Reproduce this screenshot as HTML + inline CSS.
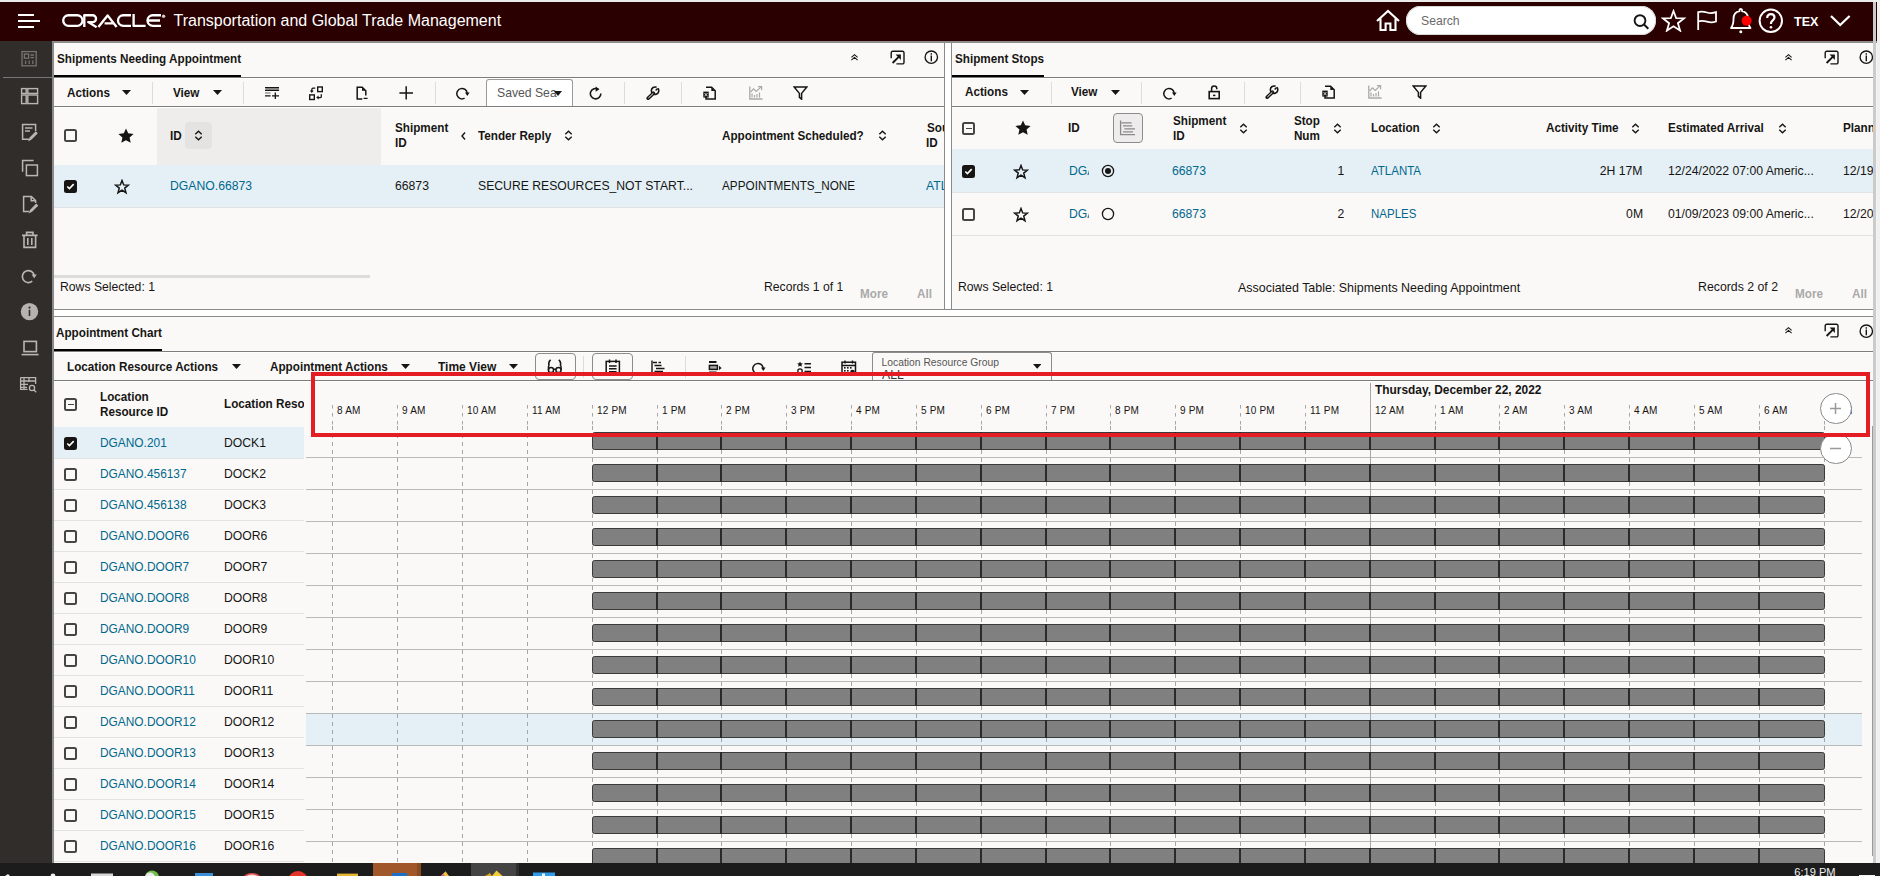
<!DOCTYPE html>
<html><head><meta charset="utf-8"><title>OTM</title>
<style>
html,body{margin:0;padding:0;}
body{width:1880px;height:876px;overflow:hidden;position:relative;background:#fbf9f8;font-family:"Liberation Sans",sans-serif;}
.a{position:absolute;display:block;}
.t{position:absolute;white-space:nowrap;line-height:20px;height:20px;}
.cb{width:13px;height:13px;box-sizing:border-box;border:2px solid #454545;border-radius:2.5px;}
.ck{background:#161513;border-color:#161513;}
</style></head><body>

<div class="a" style="left:0px;top:0px;width:1880px;height:2px;background:#ececec;"></div>
<div class="a" style="left:0px;top:2px;width:1877px;height:39px;background:#2a0000;"></div>
<div class="a" style="left:1877px;top:0px;width:3px;height:863px;background:#f0f0f0;"></div>
<div class="a" style="left:1876px;top:41px;width:1px;height:822px;background:#f4f4f4;"></div>
<div class="a" style="left:0px;top:41px;width:52px;height:822px;background:#312d2a;"></div>
<div class="a" style="left:52px;top:41px;width:2px;height:822px;background:#8a8a8a;"></div>
<div class="a" style="left:3px;top:77px;width:49px;height:1px;background:#777;"></div>
<svg class="a" style="left:20px;top:50px;" width="18" height="18" viewBox="0 0 18 18"><g stroke="#78736e" stroke-width="1.3" fill="none"><rect x="2" y="1.6" width="14.2" height="14.2"/><rect x="4.4" y="4" width="4.2" height="4.2"/><path d="M10.4 5 H14 M10.4 7.6 H14 M5.6 10.4 V14 M9.2 10.4 V14 M12.8 10.4 V14"/></g></svg>
<svg class="a" style="left:19px;top:86px;" width="21" height="20" viewBox="0 0 21 20"><g stroke="#b9b6b3" stroke-width="1.4" fill="none"><rect x="2.6" y="2.6" width="4.6" height="4.8"/><rect x="8.8" y="2.6" width="9.8" height="4.8"/><rect x="2.6" y="9" width="4.6" height="8.6"/><rect x="8.8" y="9" width="9.8" height="8.6"/></g></svg>
<svg class="a" style="left:20px;top:122px;" width="20" height="20" viewBox="0 0 20 20"><g stroke="#b9b6b3" stroke-width="1.5" fill="none"><path d="M9 17.2 H2.6 V2.4 H15.6 V9"/><path d="M5 6 H12.5 M5 9 H10"/><path d="M16.8 11.2 L11.2 16.8 L9.6 17.8 L10.2 16 L15.8 10.2 Z"/></g></svg>
<svg class="a" style="left:20px;top:158px;" width="20" height="20" viewBox="0 0 20 20"><g stroke="#b9b6b3" stroke-width="1.5" fill="none"><path d="M2.6 13.8 V2.6 H13.6"/><rect x="6.4" y="7" width="11" height="10.6"/></g></svg>
<svg class="a" style="left:20px;top:194px;" width="20" height="20" viewBox="0 0 20 20"><g stroke="#b9b6b3" stroke-width="1.5" fill="none"><path d="M9 17.4 H3.6 V2.4 H11.4 L15.6 6.6 V9"/><path d="M11.2 2.6 V6.8 H15.4"/><path d="M17.2 11.6 L11.6 17.2 L10 18 L10.6 16.4 L16.2 10.6 Z"/></g></svg>
<svg class="a" style="left:20px;top:230px;" width="20" height="20" viewBox="0 0 20 20"><g stroke="#b9b6b3" stroke-width="1.6" fill="none"><path d="M2 5.4 H17.6 M6.6 5.4 V2.4 H13 V5.4"/><path d="M4 5.4 V17.4 H15.6 V5.4 M7.8 8 V15 M11.8 8 V15"/></g></svg>
<svg class="a" style="left:20px;top:268px;" width="18" height="18" viewBox="0 0 18 18"><path d="M12.2 13.2 A6 6 0 1 1 14.2 7.4" stroke="#b9b6b3" stroke-width="1.7" fill="none"/><path d="M11.6 6.4 L16.8 6.4 L14.2 10.2 Z" fill="#b9b6b3"/></svg>
<svg class="a" style="left:19.5px;top:302px;" width="19" height="19" viewBox="0 0 19 19"><circle cx="9.5" cy="9.6" r="8.7" fill="#b5b2af"/><circle cx="9.5" cy="5.6" r="1.1" fill="#312d2a"/><path d="M9.5 7.8 V14" stroke="#312d2a" stroke-width="1.6"/></svg>
<svg class="a" style="left:20px;top:339px;" width="20" height="18" viewBox="0 0 20 18"><g stroke="#b9b6b3" stroke-width="1.6" fill="none"><rect x="4" y="2.4" width="12.4" height="10.2"/><path d="M1.6 15.6 H18.6"/></g></svg>
<svg class="a" style="left:19px;top:376px;" width="20" height="17" viewBox="0 0 20 17"><g stroke="#b9b6b3" stroke-width="1.3" fill="none"><path d="M1.6 1.6 H16.6 V8 M1.6 1.6 V13.4 H8.5 M1.6 5 H16.6 M1.6 8.4 H9 M1.6 11.4 H8 M5 1.6 V13 M10 1.6 V6"/><circle cx="13" cy="12" r="2.6"/><path d="M14.8 13.8 L17.2 16.2"/></g></svg>
<div class="a" style="left:944px;top:42px;width:8px;height:268px;background:#ffffff;"></div>
<div class="a" style="left:54px;top:309px;width:1819px;height:8px;background:#ffffff;"></div>
<div class="a" style="left:54px;top:41px;width:1823px;height:2px;background:#8c8c8c;"></div>
<div class="a" style="left:944px;top:42px;width:1px;height:268px;background:#8a8a8a;"></div>
<div class="a" style="left:951px;top:42px;width:1px;height:268px;background:#8a8a8a;"></div>
<div class="a" style="left:54px;top:309px;width:1819px;height:1px;background:#8a8a8a;"></div>
<div class="a" style="left:54px;top:316px;width:1819px;height:1px;background:#8a8a8a;"></div>
<div class="a" style="left:18px;top:14px;width:16px;height:2px;background:#ffffff;"></div>
<div class="a" style="left:18px;top:20px;width:22px;height:2px;background:#ffffff;"></div>
<div class="a" style="left:18px;top:26px;width:16px;height:2px;background:#ffffff;"></div>
<svg class="a" style="left:61px;top:13px;" width="106" height="15" viewBox="0 0 106 15"><g stroke="#fff" stroke-width="2.35" fill="none" stroke-linejoin="round">
<rect x="2.2" y="2.2" width="19.3" height="10.6" rx="5.3"/>
<path d="M23.3 14 V2.2 H31.6 A3.45 3.45 0 0 1 31.6 9.1 H27.2 L35.6 14.2"/>
<path d="M37.4 14 L46.6 2.4 L55.6 14 M43.6 10.3 H52.6"/>
<path d="M70 2.2 H62.3 A5.3 5.3 0 0 0 62.3 12.8 H70"/>
<path d="M72.6 1 V12.8 H84.6"/>
<path d="M100 2.2 H91.8 A5.3 5.3 0 0 0 91.8 12.8 H100 M87 7.5 H99"/>
</g><circle cx="102.6" cy="3.2" r="1.7" fill="#ccc"/></svg>
<div class="t" style="left:173.5px;top:11px;font-size:16.0px;font-weight:normal;color:#ffffff;">Transportation and Global Trade Management</div>
<svg class="a" style="left:1375px;top:9px;" width="26" height="23" viewBox="0 0 26 23"><path d="M2 12 L13 2 L24 12 M5.5 9.2 V21 H10.6 V14.5 H15.4 V21 H20.5 V9.2" stroke="#fff" stroke-width="2.1" fill="none" stroke-linejoin="miter"/></svg>
<div class="a" style="left:1406px;top:6px;width:250px;height:29px;background:#fff;border-radius:15px;box-shadow:0 0 0 1px #d8d8d8 inset"></div>
<div class="t" style="left:1421px;top:11.3px;font-size:13.0px;font-weight:normal;color:#6a6a6a;transform:scaleX(0.9385);transform-origin:0 0;">Search</div>
<svg class="a" style="left:1633px;top:14px;" width="18" height="16" viewBox="0 0 18 16"><circle cx="7" cy="6.6" r="5.4" stroke="#161513" stroke-width="1.9" fill="none"/><path d="M11 10.6 L15.3 14.8" stroke="#161513" stroke-width="2.1"/></svg>
<svg class="a" style="left:1661px;top:9px;" width="26" height="23" viewBox="0 0 26 23"><polygon points="12.5,2 15.2,9.2 23,9.4 16.9,14.2 19.1,21.6 12.5,17.3 5.9,21.6 8.1,14.2 2,9.4 9.8,9.2" fill="none" stroke="#fff" stroke-width="1.8" stroke-linejoin="miter"/></svg>
<svg class="a" style="left:1696px;top:10px;" width="23" height="21" viewBox="0 0 23 21"><path d="M2.2 20 V2.2 C5 1 8 1.6 11 2.5 C14 3.4 17 3.2 20 2.2 V11.5 C17 12.6 14 12.6 11 11.7 C8 10.8 5 10.6 2.2 11.5" stroke="#fff" stroke-width="1.8" fill="none"/></svg>
<svg class="a" style="left:1728px;top:7px;" width="26" height="27" viewBox="0 0 26 27"><path d="M3 21 C5 18.5 5.5 16 5.5 12 C5.5 7.5 8 4.8 11.5 4.2 V2.8 A1.3 1.3 0 0 1 14 2.8 V4.2 C17.5 4.8 20 7.5 20 12 C20 16 20.5 18.5 22.5 21 Z" stroke="#fff" stroke-width="1.8" fill="none" stroke-linejoin="round"/><circle cx="12.8" cy="24.7" r="1.5" fill="#fff"/><circle cx="18.6" cy="13.8" r="5" fill="#ff0000"/></svg>
<svg class="a" style="left:1758px;top:8px;" width="26" height="26" viewBox="0 0 26 26"><circle cx="12.8" cy="12.8" r="11.2" stroke="#fff" stroke-width="2" fill="none"/><path d="M9.2 10 C9.2 7.4 10.8 6.2 12.9 6.2 C15 6.2 16.5 7.6 16.5 9.6 C16.5 12.2 13 12.4 13 15.2 V16" stroke="#fff" stroke-width="2.2" fill="none"/><circle cx="13" cy="19.3" r="1.3" fill="#fff"/></svg>
<div class="t" style="left:1794px;top:11.8px;font-size:12.6px;font-weight:bold;color:#ffffff;">TEX</div>
<svg class="a" style="left:1829px;top:14px;" width="23" height="13" viewBox="0 0 23 13"><path d="M2 2 L11.2 11 L20.6 2" stroke="#fff" stroke-width="2.3" fill="none"/></svg>
<div class="t" style="left:57px;top:49.2px;font-size:13.0px;font-weight:bold;color:#161513;transform:scaleX(0.9000);transform-origin:0 0;">Shipments Needing Appointment</div>
<div class="a" style="left:54px;top:75px;width:187px;height:2px;background:#000;"></div>
<div class="a" style="left:54px;top:77px;width:890px;height:1px;background:#7d7d7d;"></div>
<div class="a" style="left:54px;top:78px;width:890px;height:1px;background:#ffffff;"></div>
<svg class="a" style="left:849.5px;top:53px;" width="9" height="9" viewBox="0 0 9 9"><path d="M1.4 4.4 L4.5 1.6 L7.6 4.4 M1.4 7.2 L4.5 4.4 L7.6 7.2" stroke="#161513" stroke-width="1.05" fill="none"/></svg>
<svg class="a" style="left:889.5px;top:49.5px;" width="15" height="15" viewBox="0 0 15 15"><path d="M1.2 8.2 V2.7 A1.5 1.5 0 0 1 2.7 1.2 H12.5 A1.5 1.5 0 0 1 14 2.7 V12.4 A1.5 1.5 0 0 1 12.5 13.9 H6.4" stroke="#161513" stroke-width="1.4" fill="none"/><path d="M2.6 13 L9.2 6.4" stroke="#161513" stroke-width="1.9"/><path d="M5.6 4.6 H10.9 V9.9 Z" fill="#161513"/></svg>
<svg class="a" style="left:924px;top:49.5px;" width="15" height="15" viewBox="0 0 15 15"><circle cx="7.3" cy="7.2" r="6.2" stroke="#161513" stroke-width="1.35" fill="none"/><rect x="6.6" y="3.2" width="1.4" height="1.5" fill="#161513"/><path d="M7.3 5.6 V11.2" stroke="#161513" stroke-width="1.4"/></svg>
<div class="t" style="left:67.2px;top:82.5px;font-size:13.0px;font-weight:bold;color:#161513;transform:scaleX(0.9000);transform-origin:0 0;">Actions</div>
<svg class="a" style="left:122px;top:90.2px;" width="9" height="5" viewBox="0 0 9 5"><polygon points="0,0 9,0 4.5,5" fill="#161513"/></svg>
<div class="a" style="left:152px;top:82px;width:1px;height:22px;background:#dcdcdc;"></div>
<div class="t" style="left:173px;top:82.5px;font-size:13.0px;font-weight:bold;color:#161513;transform:scaleX(0.9000);transform-origin:0 0;">View</div>
<svg class="a" style="left:213px;top:90.2px;" width="9" height="5" viewBox="0 0 9 5"><polygon points="0,0 9,0 4.5,5" fill="#161513"/></svg>
<div class="a" style="left:243px;top:82px;width:1px;height:22px;background:#dcdcdc;"></div>
<svg class="a" style="left:265px;top:86px;" width="15" height="14" viewBox="0 0 15 14"><rect x="0.5" y="1.5" width="13.6" height="3" fill="#a8a8a8"/><path d="M0 1.6 H14 M0 4.4 H14" stroke="#161513" stroke-width="1.1"/><path d="M0 7 H5.6" stroke="#777" stroke-width="1.1"/><path d="M0 9.8 H5.6 M7 9.8 H14 M10.3 6.5 V13" stroke="#161513" stroke-width="1.3"/></svg>
<svg class="a" style="left:309.2px;top:85.6px;" width="15" height="15" viewBox="0 0 15 15"><rect x="8.7" y="1" width="4.6" height="4.6" stroke="#161513" stroke-width="1.4" fill="#fff"/><rect x="0.7" y="8.9" width="4.6" height="4.6" stroke="#161513" stroke-width="1.4" fill="#fff"/><path d="M6.3 2.2 H4 C3 2.2 2.8 3 2.8 4 V5.6" stroke="#161513" stroke-width="1.3" fill="none"/><path d="M0.9 4.6 L2.8 7 L4.7 4.6 Z" fill="#161513"/><path d="M12.3 8.2 V10.4 C12.3 11.2 11.8 11.6 11 11.6 H9" stroke="#161513" stroke-width="1.3" fill="none"/><path d="M9.6 9.5 L7.2 11.6 L9.6 13.6 Z" fill="#161513"/></svg>
<svg class="a" style="left:356px;top:85.8px;" width="13" height="14" viewBox="0 0 13 14"><path d="M6.3 13 H1.2 V1.2 H6.2 L9.8 4.8 V9.5" stroke="#161513" stroke-width="1.5" fill="none" stroke-linejoin="miter"/><path d="M6 1.5 V4.8 H9.5 Z" fill="#161513"/><path d="M7.6 12.4 H11.6" stroke="#161513" stroke-width="1.3"/></svg>
<svg class="a" style="left:398.7px;top:86px;" width="15" height="15" viewBox="0 0 15 15"><path d="M0.4 7 H14 M7.2 0.2 V13.6" stroke="#161513" stroke-width="1.5"/></svg>
<div class="a" style="left:434.5px;top:82px;width:1px;height:22px;background:#dcdcdc;"></div>
<svg class="a" style="left:456.2px;top:86.6px;" width="14" height="13" viewBox="0 0 14 13"><path d="M8.6 11.2 A5.2 5.2 0 1 1 11.2 6.2" stroke="#161513" stroke-width="1.5" fill="none"/><path d="M9 5.6 L13.6 5.6 L11.3 8.9 Z" fill="#161513"/></svg>
<div class="a" style="left:486px;top:78.5px;width:87px;height:28px;box-sizing:border-box;background:#fff;border:1px solid #9a9a9a;border-bottom:none;border-radius:3px 3px 0 0"></div>
<div class="t" style="left:496.6px;top:82.7px;font-size:13.0px;font-weight:normal;color:#555;transform:scaleX(0.9385);transform-origin:0 0;">Saved Sea</div>
<svg class="a" style="left:554px;top:90.7px;" width="8" height="5" viewBox="0 0 8 5"><polygon points="0,0 8,0 4.0,5" fill="#161513"/></svg>
<svg class="a" style="left:588.6px;top:86px;" width="14" height="14" viewBox="0 0 14 14"><path d="M9.4 3.3 A5.2 5.2 0 1 0 11.8 7.6" stroke="#161513" stroke-width="1.6" fill="none"/><path d="M6.6 0.4 L10.4 3.2 L6.6 5.8 Z" fill="#161513"/></svg>
<div class="a" style="left:624px;top:82px;width:1px;height:22px;background:#dcdcdc;"></div>
<svg class="a" style="left:645.8px;top:85.6px;" width="15" height="14" viewBox="0 0 15 14"><path d="M11.9 2.3 A3.7 3.7 0 1 1 10.6 1.3" stroke="#161513" stroke-width="1.6" fill="none"/><path d="M9.6 4.6 L11.6 2.4" stroke="#161513" stroke-width="1.5"/><path d="M7.4 7.2 L2.2 12.2" stroke="#161513" stroke-width="3.6" stroke-linecap="round"/><path d="M7 7.6 L2.6 11.8" stroke="#fbf9f8" stroke-width="1" stroke-linecap="round"/></svg>
<div class="a" style="left:681px;top:82px;width:1px;height:22px;background:#dcdcdc;"></div>
<svg class="a" style="left:702.8px;top:85.6px;" width="14" height="14" viewBox="0 0 14 14"><path d="M3 1.2 H8.6 L12.2 4.8 V13 H3 V10.6" stroke="#161513" stroke-width="1.5" fill="none"/><path d="M8.3 1.5 V5 H11.9 Z" fill="#161513"/><rect x="0.3" y="5.6" width="5.4" height="6" fill="#161513"/><path d="M1.5 7 L4.5 10.3 M4.5 7 L1.5 10.3" stroke="#fff" stroke-width="0.8"/></svg>
<svg class="a" style="left:748.5px;top:85.8px;" width="14" height="14" viewBox="0 0 14 14"><path d="M0.8 0.5 V13 H13.5" stroke="#a9a9a9" stroke-width="1.3" fill="none"/><path d="M3 11.5 V7.5 M5.5 11.5 V9 M8 11.5 V8 M10.5 11.5 V6.5" stroke="#a9a9a9" stroke-width="1.2"/><path d="M1.5 6.2 L4.5 2.8 L7.2 5.4 L11.8 1.1" stroke="#a9a9a9" stroke-width="1.2" fill="none"/><path d="M9 0.6 H12.6 V4.2" stroke="#a9a9a9" stroke-width="1.2" fill="none"/></svg>
<svg class="a" style="left:792.6px;top:85.6px;" width="15" height="14" viewBox="0 0 15 14"><path d="M1.2 1 H13.8 L8.6 7.4 V13.2 L6.4 11.4 V7.4 Z" stroke="#161513" stroke-width="1.5" fill="none" stroke-linejoin="miter"/></svg>
<div class="a" style="left:54px;top:106px;width:890px;height:1px;background:#7d7d7d;"></div>
<div class="a" style="left:54px;top:107px;width:890px;height:1px;background:#ffffff;"></div>
<div class="a" style="left:157px;top:108px;width:223.5px;height:56.5px;background:#efedec;"></div>
<div class="a cb" style="left:64px;top:129px"></div>
<svg class="a" style="left:117.6px;top:127.8px;" width="16" height="16" viewBox="0 0 16 16"><polygon points="8.00,0.40 10.20,5.37 15.61,5.93 11.57,9.56 12.70,14.87 8.00,12.15 3.30,14.87 4.43,9.56 0.39,5.93 5.80,5.37" fill="#161513"/></svg>
<div class="t" style="left:169.9px;top:126.30000000000001px;font-size:13.0px;font-weight:bold;color:#161513;transform:scaleX(0.9000);transform-origin:0 0;">ID</div>
<div class="a" style="left:185px;top:122px;width:27px;height:27px;background:#e5e3e2;border-radius:4px"></div>
<svg class="a" style="left:194px;top:130px;" width="9" height="11" viewBox="0 0 9 11"><path d="M1.3 4.2 L4.5 1.2 L7.7 4.2 M1.3 6.8 L4.5 9.8 L7.7 6.8" stroke="#161513" stroke-width="1.4" fill="none"/></svg>
<div class="t" style="left:394.7px;top:118.19999999999999px;font-size:13.0px;font-weight:bold;color:#161513;transform:scaleX(0.9000);transform-origin:0 0;">Shipment</div>
<div class="t" style="left:394.7px;top:133.2px;font-size:13.0px;font-weight:bold;color:#161513;transform:scaleX(0.9000);transform-origin:0 0;">ID</div>
<svg class="a" style="left:459.5px;top:131px;" width="7" height="10" viewBox="0 0 7 10"><path d="M5 1.5 L2 5 L5 8.5" stroke="#161513" stroke-width="1.4" fill="none"/></svg>
<div class="t" style="left:478.1px;top:126.19999999999999px;font-size:13.0px;font-weight:bold;color:#161513;transform:scaleX(0.9000);transform-origin:0 0;">Tender Reply</div>
<svg class="a" style="left:564.2px;top:130.2px;" width="9" height="11" viewBox="0 0 9 11"><path d="M1.3 4.2 L4.5 1.2 L7.7 4.2 M1.3 6.8 L4.5 9.8 L7.7 6.8" stroke="#161513" stroke-width="1.4" fill="none"/></svg>
<div class="t" style="left:722.2px;top:126.19999999999999px;font-size:13.0px;font-weight:bold;color:#161513;transform:scaleX(0.9000);transform-origin:0 0;">Appointment Scheduled?</div>
<svg class="a" style="left:877.5px;top:130.2px;" width="9" height="11" viewBox="0 0 9 11"><path d="M1.3 4.2 L4.5 1.2 L7.7 4.2 M1.3 6.8 L4.5 9.8 L7.7 6.8" stroke="#161513" stroke-width="1.4" fill="none"/></svg>
<div class="a" style="left:920px;top:108px;width:24px;height:56px;overflow:hidden">
<div class="t" style="left:6.9px;top:10.199999999999989px;font-size:13.0px;font-weight:bold;color:#161513;transform:scaleX(0.9000);transform-origin:0 0;">Sou</div>
<div class="t" style="left:6.2px;top:25.19999999999999px;font-size:13.0px;font-weight:bold;color:#161513;transform:scaleX(0.9000);transform-origin:0 0;">ID</div>
</div>
<div class="a" style="left:54px;top:164.5px;width:890px;height:43px;background:#e4f0f6;"></div>
<div class="a" style="left:54px;top:207px;width:890px;height:1px;background:#dfe3e5;"></div>
<div class="a cb ck" style="left:64px;top:180px"><svg width="13" height="13" viewBox="0 0 13 13" style="position:absolute;left:-2px;top:-2px"><path d="M3.3 6.5 L5.4 8.6 L9.7 4.1" stroke="#fff" stroke-width="1.6" fill="none"/></svg></div>
<svg class="a" style="left:114px;top:178.8px;" width="16" height="16" viewBox="0 0 16 16"><polygon points="8.00,0.40 10.00,5.65 15.61,5.93 11.23,9.45 12.70,14.87 8.00,11.80 3.30,14.87 4.77,9.45 0.39,5.93 6.00,5.65" fill="none" stroke="#161513" stroke-width="1.75" stroke-linejoin="miter" transform="translate(1.2 1.1) scale(0.85)"/></svg>
<div class="t" style="left:170px;top:176.4px;font-size:13.0px;font-weight:normal;color:#00688c;transform:scaleX(0.9385);transform-origin:0 0;">DGANO.66873</div>
<div class="t" style="left:394.7px;top:176.2px;font-size:13.0px;font-weight:normal;color:#161513;transform:scaleX(0.9385);transform-origin:0 0;">66873</div>
<div class="t" style="left:478.1px;top:176.2px;font-size:13.0px;font-weight:normal;color:#161513;transform:scaleX(0.9385);transform-origin:0 0;">SECURE RESOURCES_NOT START...</div>
<div class="t" style="left:722.2px;top:176.4px;font-size:12.52px;font-weight:normal;color:#161513;transform:scaleX(0.9385);transform-origin:0 0;">APPOINTMENTS_NONE</div>
<div class="a" style="left:920px;top:165px;width:24px;height:40px;overflow:hidden">
<div class="t" style="left:6.2px;top:11.400000000000006px;font-size:13.0px;font-weight:normal;color:#00688c;transform:scaleX(0.9385);transform-origin:0 0;">ATL</div>
</div>
<div class="a" style="left:54px;top:275px;width:316px;height:3px;background:#dcdcdc;"></div>
<div class="t" style="left:60px;top:277px;font-size:13.0px;font-weight:normal;color:#161513;transform:scaleX(0.9385);transform-origin:0 0;">Rows Selected: 1</div>
<div class="t" style="left:763.7px;top:277.2px;font-size:13.0px;font-weight:normal;color:#161513;transform:scaleX(0.9385);transform-origin:0 0;">Records 1 of 1</div>
<div class="t" style="left:860px;top:284.2px;font-size:13.0px;font-weight:bold;color:#a9a9a9;transform:scaleX(0.9000);transform-origin:0 0;">More</div>
<div class="t" style="left:917.4px;top:284.3px;font-size:13.0px;font-weight:bold;color:#a9a9a9;transform:scaleX(0.9000);transform-origin:0 0;">All</div>
<div class="t" style="left:955.3px;top:49.3px;font-size:13.0px;font-weight:bold;color:#161513;transform:scaleX(0.9000);transform-origin:0 0;">Shipment Stops</div>
<div class="a" style="left:952px;top:75px;width:92px;height:2px;background:#000;"></div>
<div class="a" style="left:952px;top:77px;width:921px;height:1px;background:#7d7d7d;"></div>
<div class="a" style="left:952px;top:78px;width:921px;height:1px;background:#ffffff;"></div>
<svg class="a" style="left:1783.5px;top:52.5px;" width="9" height="9" viewBox="0 0 9 9"><path d="M1.4 4.4 L4.5 1.6 L7.6 4.4 M1.4 7.2 L4.5 4.4 L7.6 7.2" stroke="#161513" stroke-width="1.05" fill="none"/></svg>
<svg class="a" style="left:1824px;top:49.5px;" width="15" height="15" viewBox="0 0 15 15"><path d="M1.2 8.2 V2.7 A1.5 1.5 0 0 1 2.7 1.2 H12.5 A1.5 1.5 0 0 1 14 2.7 V12.4 A1.5 1.5 0 0 1 12.5 13.9 H6.4" stroke="#161513" stroke-width="1.4" fill="none"/><path d="M2.6 13 L9.2 6.4" stroke="#161513" stroke-width="1.9"/><path d="M5.6 4.6 H10.9 V9.9 Z" fill="#161513"/></svg>
<svg class="a" style="left:1858.8px;top:49.5px;" width="15" height="15" viewBox="0 0 15 15"><circle cx="7.3" cy="7.2" r="6.2" stroke="#161513" stroke-width="1.35" fill="none"/><rect x="6.6" y="3.2" width="1.4" height="1.5" fill="#161513"/><path d="M7.3 5.6 V11.2" stroke="#161513" stroke-width="1.4"/></svg>
<div class="t" style="left:965.4px;top:81.9px;font-size:13.0px;font-weight:bold;color:#161513;transform:scaleX(0.9000);transform-origin:0 0;">Actions</div>
<svg class="a" style="left:1020.3px;top:89.7px;" width="9" height="5" viewBox="0 0 9 5"><polygon points="0,0 9,0 4.5,5" fill="#161513"/></svg>
<div class="a" style="left:1050.5px;top:82px;width:1px;height:22px;background:#dcdcdc;"></div>
<div class="t" style="left:1071.2px;top:81.9px;font-size:13.0px;font-weight:bold;color:#161513;transform:scaleX(0.9000);transform-origin:0 0;">View</div>
<svg class="a" style="left:1111.3px;top:89.7px;" width="9" height="5" viewBox="0 0 9 5"><polygon points="0,0 9,0 4.5,5" fill="#161513"/></svg>
<div class="a" style="left:1141.3px;top:82px;width:1px;height:22px;background:#dcdcdc;"></div>
<svg class="a" style="left:1162.6px;top:86.8px;" width="14" height="13" viewBox="0 0 14 13"><path d="M8.6 11.2 A5.2 5.2 0 1 1 11.2 6.2" stroke="#161513" stroke-width="1.5" fill="none"/><path d="M9 5.6 L13.6 5.6 L11.3 8.9 Z" fill="#161513"/></svg>
<svg class="a" style="left:1208px;top:83.8px;" width="13" height="16" viewBox="0 0 13 16"><rect x="1.2" y="7.6" width="10" height="7" stroke="#161513" stroke-width="1.6" fill="none"/><path d="M3.6 7.6 V4.6 A2.6 2.6 0 0 1 8.8 4.6 V5.2" stroke="#161513" stroke-width="1.5" fill="none"/><path d="M5 11.4 H7.4" stroke="#161513" stroke-width="1.5"/></svg>
<div class="a" style="left:1243.5px;top:82px;width:1px;height:22px;background:#dcdcdc;"></div>
<svg class="a" style="left:1265px;top:85px;" width="15" height="14" viewBox="0 0 15 14"><path d="M11.9 2.3 A3.7 3.7 0 1 1 10.6 1.3" stroke="#161513" stroke-width="1.6" fill="none"/><path d="M9.6 4.6 L11.6 2.4" stroke="#161513" stroke-width="1.5"/><path d="M7.4 7.2 L2.2 12.2" stroke="#161513" stroke-width="3.6" stroke-linecap="round"/><path d="M7 7.6 L2.6 11.8" stroke="#fbf9f8" stroke-width="1" stroke-linecap="round"/></svg>
<div class="a" style="left:1300px;top:82px;width:1px;height:22px;background:#dcdcdc;"></div>
<svg class="a" style="left:1321.6px;top:85.2px;" width="14" height="14" viewBox="0 0 14 14"><path d="M3 1.2 H8.6 L12.2 4.8 V13 H3 V10.6" stroke="#161513" stroke-width="1.5" fill="none"/><path d="M8.3 1.5 V5 H11.9 Z" fill="#161513"/><rect x="0.3" y="5.6" width="5.4" height="6" fill="#161513"/><path d="M1.5 7 L4.5 10.3 M4.5 7 L1.5 10.3" stroke="#fff" stroke-width="0.8"/></svg>
<svg class="a" style="left:1367.6px;top:85.3px;" width="14" height="14" viewBox="0 0 14 14"><path d="M0.8 0.5 V13 H13.5" stroke="#a9a9a9" stroke-width="1.3" fill="none"/><path d="M3 11.5 V7.5 M5.5 11.5 V9 M8 11.5 V8 M10.5 11.5 V6.5" stroke="#a9a9a9" stroke-width="1.2"/><path d="M1.5 6.2 L4.5 2.8 L7.2 5.4 L11.8 1.1" stroke="#a9a9a9" stroke-width="1.2" fill="none"/><path d="M9 0.6 H12.6 V4.2" stroke="#a9a9a9" stroke-width="1.2" fill="none"/></svg>
<svg class="a" style="left:1411.6px;top:85px;" width="15" height="14" viewBox="0 0 15 14"><path d="M1.2 1 H13.8 L8.6 7.4 V13.2 L6.4 11.4 V7.4 Z" stroke="#161513" stroke-width="1.5" fill="none" stroke-linejoin="miter"/></svg>
<div class="a" style="left:952px;top:106px;width:921px;height:1px;background:#7d7d7d;"></div>
<div class="a" style="left:952px;top:107px;width:921px;height:1px;background:#ffffff;"></div>
<div class="a cb" style="left:962px;top:122px"><div class="a" style="left:1.5px;top:3.8px;width:6px;height:1.5px;background:#454545"></div></div>
<svg class="a" style="left:1015.4px;top:120.4px;" width="16" height="16" viewBox="0 0 16 16"><polygon points="8.00,0.40 10.20,5.37 15.61,5.93 11.57,9.56 12.70,14.87 8.00,12.15 3.30,14.87 4.43,9.56 0.39,5.93 5.80,5.37" fill="#161513"/></svg>
<div class="t" style="left:1068px;top:118px;font-size:13.0px;font-weight:bold;color:#161513;transform:scaleX(0.9000);transform-origin:0 0;">ID</div>
<div class="a" style="left:1113px;top:113px;width:30px;height:30px;box-sizing:border-box;background:#eeecec;border:1.2px solid #8c8c8c;border-radius:4px"></div>
<svg class="a" style="left:1119px;top:119px;" width="18" height="18" viewBox="0 0 18 18"><g stroke="#8a8a8a" stroke-width="1.3" fill="none"><path d="M1.6 1.5 V15.6 H16"/><path d="M2.3 3.8 H12.6 M4 6.8 H13.2 M5.4 9.9 H16 M4 12.8 H14"/></g></svg>
<div class="t" style="left:1173.2px;top:111px;font-size:13.0px;font-weight:bold;color:#161513;transform:scaleX(0.9000);transform-origin:0 0;">Shipment</div>
<div class="t" style="left:1173.2px;top:125.80000000000001px;font-size:13.0px;font-weight:bold;color:#161513;transform:scaleX(0.9000);transform-origin:0 0;">ID</div>
<svg class="a" style="left:1239px;top:123px;" width="9" height="11" viewBox="0 0 9 11"><path d="M1.3 4.2 L4.5 1.2 L7.7 4.2 M1.3 6.8 L4.5 9.8 L7.7 6.8" stroke="#161513" stroke-width="1.4" fill="none"/></svg>
<div class="t" style="right:560px;top:111px;font-size:13.0px;font-weight:bold;color:#161513;text-align:right;transform:scaleX(0.9000);transform-origin:100% 0;">Stop</div>
<div class="t" style="right:560px;top:125.69999999999999px;font-size:13.0px;font-weight:bold;color:#161513;text-align:right;transform:scaleX(0.9000);transform-origin:100% 0;">Num</div>
<svg class="a" style="left:1333.4px;top:123.3px;" width="9" height="11" viewBox="0 0 9 11"><path d="M1.3 4.2 L4.5 1.2 L7.7 4.2 M1.3 6.8 L4.5 9.8 L7.7 6.8" stroke="#161513" stroke-width="1.4" fill="none"/></svg>
<div class="t" style="left:1370.6px;top:118.19999999999999px;font-size:13.0px;font-weight:bold;color:#161513;transform:scaleX(0.9000);transform-origin:0 0;">Location</div>
<svg class="a" style="left:1432.2px;top:123.3px;" width="9" height="11" viewBox="0 0 9 11"><path d="M1.3 4.2 L4.5 1.2 L7.7 4.2 M1.3 6.8 L4.5 9.8 L7.7 6.8" stroke="#161513" stroke-width="1.4" fill="none"/></svg>
<div class="t" style="left:1545.8px;top:118.19999999999999px;font-size:13.0px;font-weight:bold;color:#161513;transform:scaleX(0.9000);transform-origin:0 0;">Activity Time</div>
<svg class="a" style="left:1631px;top:123.3px;" width="9" height="11" viewBox="0 0 9 11"><path d="M1.3 4.2 L4.5 1.2 L7.7 4.2 M1.3 6.8 L4.5 9.8 L7.7 6.8" stroke="#161513" stroke-width="1.4" fill="none"/></svg>
<div class="t" style="left:1668.2px;top:118.19999999999999px;font-size:13.0px;font-weight:bold;color:#161513;transform:scaleX(0.9000);transform-origin:0 0;">Estimated Arrival</div>
<svg class="a" style="left:1778.2px;top:123.3px;" width="9" height="11" viewBox="0 0 9 11"><path d="M1.3 4.2 L4.5 1.2 L7.7 4.2 M1.3 6.8 L4.5 9.8 L7.7 6.8" stroke="#161513" stroke-width="1.4" fill="none"/></svg>
<div class="a" style="left:952px;top:149.3px;width:921px;height:43px;background:#e4f0f6;"></div>
<div class="a" style="left:952px;top:192px;width:921px;height:1px;background:#dfe3e5;"></div>
<div class="a" style="left:952px;top:235px;width:921px;height:1px;background:#e1e1e1;"></div>
<div class="a cb ck" style="left:962px;top:165px"><svg width="13" height="13" viewBox="0 0 13 13" style="position:absolute;left:-2px;top:-2px"><path d="M3.3 6.5 L5.4 8.6 L9.7 4.1" stroke="#fff" stroke-width="1.6" fill="none"/></svg></div>
<svg class="a" style="left:1012.6px;top:163.8px;" width="16" height="16" viewBox="0 0 16 16"><polygon points="8.00,0.40 10.00,5.65 15.61,5.93 11.23,9.45 12.70,14.87 8.00,11.80 3.30,14.87 4.77,9.45 0.39,5.93 6.00,5.65" fill="none" stroke="#161513" stroke-width="1.75" stroke-linejoin="miter" transform="translate(1.2 1.1) scale(0.85)"/></svg>
<div class="a" style="left:1060px;top:154.8px;width:29px;height:26px;overflow:hidden">
<div class="t" style="left:8.5px;top:6px;font-size:13.0px;font-weight:normal;color:#00688c;transform:scaleX(0.9385);transform-origin:0 0;">DGANO.66873</div>
</div>
<svg class="a" style="left:1100.7px;top:163.60000000000002px;" width="14" height="14" viewBox="0 0 14 14"><circle cx="7" cy="7" r="5.6" stroke="#161513" stroke-width="1.3" fill="none"/><circle cx="7" cy="7" r="3" fill="#161513"/></svg>
<div class="t" style="left:1172.4px;top:160.8px;font-size:13.0px;font-weight:normal;color:#00688c;transform:scaleX(0.9385);transform-origin:0 0;">66873</div>
<div class="t" style="right:535.5999999999999px;top:160.8px;font-size:13.0px;font-weight:normal;color:#161513;text-align:right;transform:scaleX(0.9385);transform-origin:100% 0;">1</div>
<div class="t" style="left:1370.6px;top:160.8px;font-size:12.25px;font-weight:normal;color:#00688c;transform:scaleX(0.9385);transform-origin:0 0;">ATLANTA</div>
<div class="t" style="right:237.4000000000001px;top:160.8px;font-size:13.0px;font-weight:normal;color:#161513;text-align:right;transform:scaleX(0.9385);transform-origin:100% 0;">2H 17M</div>
<div class="t" style="left:1668.2px;top:160.8px;font-size:13.0px;font-weight:normal;color:#161513;transform:scaleX(0.9385);transform-origin:0 0;">12/24/2022 07:00 Americ...</div>
<div class="a cb" style="left:962px;top:208px"></div>
<svg class="a" style="left:1012.6px;top:206.9px;" width="16" height="16" viewBox="0 0 16 16"><polygon points="8.00,0.40 10.00,5.65 15.61,5.93 11.23,9.45 12.70,14.87 8.00,11.80 3.30,14.87 4.77,9.45 0.39,5.93 6.00,5.65" fill="none" stroke="#161513" stroke-width="1.75" stroke-linejoin="miter" transform="translate(1.2 1.1) scale(0.85)"/></svg>
<div class="a" style="left:1060px;top:197.9px;width:29px;height:26px;overflow:hidden">
<div class="t" style="left:8.5px;top:6px;font-size:13.0px;font-weight:normal;color:#00688c;transform:scaleX(0.9385);transform-origin:0 0;">DGANO.66873</div>
</div>
<svg class="a" style="left:1100.7px;top:206.70000000000002px;" width="14" height="14" viewBox="0 0 14 14"><circle cx="7" cy="7" r="5.6" stroke="#161513" stroke-width="1.3" fill="none"/></svg>
<div class="t" style="left:1172.4px;top:203.9px;font-size:13.0px;font-weight:normal;color:#00688c;transform:scaleX(0.9385);transform-origin:0 0;">66873</div>
<div class="t" style="right:535.5999999999999px;top:203.9px;font-size:13.0px;font-weight:normal;color:#161513;text-align:right;transform:scaleX(0.9385);transform-origin:100% 0;">2</div>
<div class="t" style="left:1370.6px;top:203.9px;font-size:12.25px;font-weight:normal;color:#00688c;transform:scaleX(0.9385);transform-origin:0 0;">NAPLES</div>
<div class="t" style="right:237.4000000000001px;top:203.9px;font-size:13.0px;font-weight:normal;color:#161513;text-align:right;transform:scaleX(0.9385);transform-origin:100% 0;">0M</div>
<div class="t" style="left:1668.2px;top:203.9px;font-size:13.0px;font-weight:normal;color:#161513;transform:scaleX(0.9385);transform-origin:0 0;">01/09/2023 09:00 Americ...</div>
<div class="a" style="left:1836px;top:108px;width:37px;height:120px;overflow:hidden">
<div class="t" style="left:6.5px;top:10.199999999999989px;font-size:13.0px;font-weight:bold;color:#161513;transform:scaleX(0.9000);transform-origin:0 0;">Plann</div>
<div class="t" style="left:6.5px;top:52.80000000000001px;font-size:13.0px;font-weight:normal;color:#161513;transform:scaleX(0.9385);transform-origin:0 0;">12/19/2022</div>
<div class="t" style="left:6.5px;top:95.9px;font-size:13.0px;font-weight:normal;color:#161513;transform:scaleX(0.9385);transform-origin:0 0;">12/20/2022</div>
</div>
<div class="t" style="left:958.2px;top:277px;font-size:13.0px;font-weight:normal;color:#161513;transform:scaleX(0.9385);transform-origin:0 0;">Rows Selected: 1</div>
<div class="t" style="left:1237.8px;top:278px;font-size:13.27px;font-weight:normal;color:#161513;transform:scaleX(0.9385);transform-origin:0 0;">Associated Table: Shipments Needing Appointment</div>
<div class="t" style="left:1697.8px;top:277.2px;font-size:13.11px;font-weight:normal;color:#161513;transform:scaleX(0.9385);transform-origin:0 0;">Records 2 of 2</div>
<div class="t" style="left:1794.5px;top:284.2px;font-size:13.0px;font-weight:bold;color:#a9a9a9;transform:scaleX(0.9000);transform-origin:0 0;">More</div>
<div class="t" style="left:1852px;top:284.3px;font-size:13.0px;font-weight:bold;color:#a9a9a9;transform:scaleX(0.9000);transform-origin:0 0;">All</div>
<div class="t" style="left:56.4px;top:323.4px;font-size:13.0px;font-weight:bold;color:#161513;transform:scaleX(0.9000);transform-origin:0 0;">Appointment Chart</div>
<div class="a" style="left:54px;top:349px;width:108px;height:2px;background:#000;"></div>
<div class="a" style="left:54px;top:351px;width:1819px;height:1px;background:#7d7d7d;"></div>
<div class="a" style="left:54px;top:352px;width:1819px;height:1px;background:#ffffff;"></div>
<svg class="a" style="left:1783.5px;top:326px;" width="9" height="9" viewBox="0 0 9 9"><path d="M1.4 4.4 L4.5 1.6 L7.6 4.4 M1.4 7.2 L4.5 4.4 L7.6 7.2" stroke="#161513" stroke-width="1.05" fill="none"/></svg>
<svg class="a" style="left:1824.2px;top:323.2px;" width="15" height="15" viewBox="0 0 15 15"><path d="M1.2 8.2 V2.7 A1.5 1.5 0 0 1 2.7 1.2 H12.5 A1.5 1.5 0 0 1 14 2.7 V12.4 A1.5 1.5 0 0 1 12.5 13.9 H6.4" stroke="#161513" stroke-width="1.4" fill="none"/><path d="M2.6 13 L9.2 6.4" stroke="#161513" stroke-width="1.9"/><path d="M5.6 4.6 H10.9 V9.9 Z" fill="#161513"/></svg>
<svg class="a" style="left:1858.8px;top:323.5px;" width="15" height="15" viewBox="0 0 15 15"><circle cx="7.3" cy="7.2" r="6.2" stroke="#161513" stroke-width="1.35" fill="none"/><rect x="6.6" y="3.2" width="1.4" height="1.5" fill="#161513"/><path d="M7.3 5.6 V11.2" stroke="#161513" stroke-width="1.4"/></svg>
<div class="t" style="left:67.4px;top:357.2px;font-size:13.0px;font-weight:bold;color:#161513;transform:scaleX(0.9000);transform-origin:0 0;">Location Resource Actions</div>
<svg class="a" style="left:231.7px;top:364.4px;" width="9" height="5" viewBox="0 0 9 5"><polygon points="0,0 9,0 4.5,5" fill="#161513"/></svg>
<div class="t" style="left:270.2px;top:357.2px;font-size:13.0px;font-weight:bold;color:#161513;transform:scaleX(0.9000);transform-origin:0 0;">Appointment Actions</div>
<svg class="a" style="left:400.7px;top:364.4px;" width="9" height="5" viewBox="0 0 9 5"><polygon points="0,0 9,0 4.5,5" fill="#161513"/></svg>
<div class="t" style="left:437.9px;top:357.2px;font-size:13.33px;font-weight:bold;color:#161513;transform:scaleX(0.9000);transform-origin:0 0;">Time View</div>
<svg class="a" style="left:509.4px;top:364.4px;" width="9" height="5" viewBox="0 0 9 5"><polygon points="0,0 9,0 4.5,5" fill="#161513"/></svg>
<div class="a" style="left:534.5px;top:353px;width:41.5px;height:27px;box-sizing:border-box;border:1.2px solid #8c8c8c;border-radius:4px"></div>
<div class="a" style="left:583px;top:356px;width:1px;height:22px;background:#dcdcdc;"></div>
<div class="a" style="left:592.3px;top:353px;width:40.5px;height:27px;box-sizing:border-box;border:1.2px solid #8c8c8c;border-radius:4px"></div>
<div class="a" style="left:685px;top:356px;width:1px;height:22px;background:#dcdcdc;"></div>
<svg class="a" style="left:547px;top:359px;" width="16" height="14" viewBox="0 0 16 14"><path d="M2 7 C1.4 4 2 2 3.6 0.8 M13.4 7 C14 4 13.4 2 11.8 0.8" stroke="#161513" stroke-width="1.6" fill="none"/><circle cx="4" cy="11" r="2.6" stroke="#161513" stroke-width="1.5" fill="none"/><circle cx="11.5" cy="11" r="2.6" stroke="#161513" stroke-width="1.5" fill="none"/><path d="M6.5 10.2 H9" stroke="#161513" stroke-width="1.4"/><path d="M1.5 7 V11 M14 7 V11" stroke="#161513" stroke-width="1.5"/></svg>
<svg class="a" style="left:604.5px;top:358.5px;" width="16" height="15" viewBox="0 0 16 15"><rect x="1.2" y="2.4" width="13.2" height="12" stroke="#161513" stroke-width="1.5" fill="none"/><path d="M4.5 0.5 V4 M11 0.5 V4" stroke="#161513" stroke-width="1.5"/><path d="M4 7 H11.6 M4 9.8 H11.6 M4 12.6 H11.6" stroke="#161513" stroke-width="1.4"/></svg>
<svg class="a" style="left:650.5px;top:359.5px;" width="15" height="14" viewBox="0 0 15 14"><path d="M1 0.5 V13.5" stroke="#161513" stroke-width="1.4"/><path d="M2 2.5 H6 M7.5 2.5 H10 M3.5 5.5 H10.5 M5 8.5 H13.5 M3.5 11.5 H12" stroke="#161513" stroke-width="1.5"/></svg>
<svg class="a" style="left:707.8px;top:360.2px;" width="15" height="14" viewBox="0 0 15 14"><path d="M1 2 H8.5 M1 12.5 H8.5" stroke="#161513" stroke-width="1.8"/><rect x="1.4" y="5.4" width="8" height="4" stroke="#161513" stroke-width="1.5" fill="#a9a9a9"/><path d="M11 5.8 L13.6 8 L11 10.2 Z" fill="#161513"/></svg>
<svg class="a" style="left:752px;top:361.5px;" width="14" height="13" viewBox="0 0 14 13"><path d="M8.6 11.2 A5.2 5.2 0 1 1 11.2 6.2" stroke="#161513" stroke-width="1.5" fill="none"/><path d="M9 5.6 L13.6 5.6 L11.3 8.9 Z" fill="#161513"/></svg>
<svg class="a" style="left:797px;top:360.5px;" width="15" height="14" viewBox="0 0 15 14"><polygon points="3,0.4 3.9,2.3 5.9,2.5 4.4,3.8 4.9,5.8 3,4.8 1.1,5.8 1.6,3.8 0.1,2.5 2.1,2.3" fill="#161513"/><path d="M7.5 2.8 H14 M7.5 6.5 H14 M7.5 10.5 H14" stroke="#161513" stroke-width="1.4"/><circle cx="3" cy="10" r="2.2" stroke="#161513" stroke-width="1.3" fill="none"/></svg>
<svg class="a" style="left:841px;top:359.5px;" width="16" height="15" viewBox="0 0 16 15"><rect x="1" y="2.2" width="13.5" height="12" stroke="#161513" stroke-width="1.5" fill="none"/><path d="M1 5.5 H14.5" stroke="#161513" stroke-width="1.5"/><path d="M4 0.5 V3.5 M11.5 0.5 V3.5" stroke="#161513" stroke-width="1.4"/><g fill="#161513"><rect x="3" y="7" width="1.6" height="1.6"/><rect x="6" y="7" width="1.6" height="1.6"/><rect x="9" y="7" width="1.6" height="1.6"/><rect x="3" y="10" width="1.6" height="1.6"/><rect x="6" y="10" width="1.6" height="1.6"/></g><circle cx="11.5" cy="12" r="2.3" fill="#161513"/></svg>
<div class="a" style="left:871.6px;top:352.3px;width:180px;height:28px;box-sizing:border-box;background:#fbf9f8;border:1px solid #8c8c8c;border-bottom:none;border-radius:3px 3px 0 0;overflow:hidden">
<div class="t" style="left:9px;top:0.0px;font-size:10.3px;font-weight:normal;color:#555;">Location Resource Group</div>
<div class="t" style="left:9px;top:11.699999999999989px;font-size:13.0px;font-weight:normal;color:#333;transform:scaleX(0.9385);transform-origin:0 0;">ALL</div>
</div>
<svg class="a" style="left:1032.7px;top:364.0px;" width="8.4" height="4.8" viewBox="0 0 8.4 4.8"><polygon points="0,0 8.4,0 4.2,4.8" fill="#161513"/></svg>
<div class="a" style="left:54px;top:380px;width:1819px;height:1px;background:#7d7d7d;"></div>
<div class="a" style="left:54px;top:381px;width:1819px;height:1px;background:#ffffff;"></div>
<div class="a cb" style="left:64px;top:398px"><div class="a" style="left:1.5px;top:3.8px;width:6px;height:1.5px;background:#454545"></div></div>
<div class="t" style="left:100.2px;top:387.3px;font-size:13.0px;font-weight:bold;color:#161513;transform:scaleX(0.9000);transform-origin:0 0;">Location</div>
<div class="t" style="left:100.2px;top:402px;font-size:13.0px;font-weight:bold;color:#161513;transform:scaleX(0.9000);transform-origin:0 0;">Resource ID</div>
<div class="a" style="left:218px;top:390px;width:86px;height:30px;overflow:hidden">
<div class="t" style="left:6.4px;top:4.399999999999977px;font-size:13.0px;font-weight:bold;color:#161513;transform:scaleX(0.9000);transform-origin:0 0;">Location Resource Name</div>
</div>
<div class="a" style="left:54px;top:427.3px;width:250px;height:31px;background:#e4f0f6;"></div>
<div class="a cb ck" style="left:64px;top:437px"><svg width="13" height="13" viewBox="0 0 13 13" style="position:absolute;left:-2px;top:-2px"><path d="M3.3 6.5 L5.4 8.6 L9.7 4.1" stroke="#fff" stroke-width="1.6" fill="none"/></svg></div>
<div class="t" style="left:100.3px;top:432.9px;font-size:12.68px;font-weight:normal;color:#00688c;transform:scaleX(0.9385);transform-origin:0 0;">DGANO.201</div>
<div class="t" style="left:224.3px;top:432.9px;font-size:13.0px;font-weight:normal;color:#161513;transform:scaleX(0.9385);transform-origin:0 0;">DOCK1</div>
<div class="a" style="left:54px;top:457.8px;width:250px;height:1px;background:#e2e2e2;"></div>
<div class="a cb" style="left:64px;top:468px"></div>
<div class="t" style="left:100.3px;top:463.9px;font-size:12.68px;font-weight:normal;color:#00688c;transform:scaleX(0.9385);transform-origin:0 0;">DGANO.456137</div>
<div class="t" style="left:224.3px;top:463.9px;font-size:13.0px;font-weight:normal;color:#161513;transform:scaleX(0.9385);transform-origin:0 0;">DOCK2</div>
<div class="a" style="left:54px;top:488.8px;width:250px;height:1px;background:#e2e2e2;"></div>
<div class="a cb" style="left:64px;top:499px"></div>
<div class="t" style="left:100.3px;top:495.0px;font-size:12.68px;font-weight:normal;color:#00688c;transform:scaleX(0.9385);transform-origin:0 0;">DGANO.456138</div>
<div class="t" style="left:224.3px;top:495.0px;font-size:13.0px;font-weight:normal;color:#161513;transform:scaleX(0.9385);transform-origin:0 0;">DOCK3</div>
<div class="a" style="left:54px;top:519.9px;width:250px;height:1px;background:#e2e2e2;"></div>
<div class="a cb" style="left:64px;top:530px"></div>
<div class="t" style="left:100.3px;top:526.0px;font-size:12.68px;font-weight:normal;color:#00688c;transform:scaleX(0.9385);transform-origin:0 0;">DGANO.DOOR6</div>
<div class="t" style="left:224.3px;top:526.0px;font-size:13.0px;font-weight:normal;color:#161513;transform:scaleX(0.9385);transform-origin:0 0;">DOOR6</div>
<div class="a" style="left:54px;top:550.9px;width:250px;height:1px;background:#e2e2e2;"></div>
<div class="a cb" style="left:64px;top:561px"></div>
<div class="t" style="left:100.3px;top:557.0px;font-size:12.68px;font-weight:normal;color:#00688c;transform:scaleX(0.9385);transform-origin:0 0;">DGANO.DOOR7</div>
<div class="t" style="left:224.3px;top:557.0px;font-size:13.0px;font-weight:normal;color:#161513;transform:scaleX(0.9385);transform-origin:0 0;">DOOR7</div>
<div class="a" style="left:54px;top:581.9px;width:250px;height:1px;background:#e2e2e2;"></div>
<div class="a cb" style="left:64px;top:592px"></div>
<div class="t" style="left:100.3px;top:588.1px;font-size:12.68px;font-weight:normal;color:#00688c;transform:scaleX(0.9385);transform-origin:0 0;">DGANO.DOOR8</div>
<div class="t" style="left:224.3px;top:588.1px;font-size:13.0px;font-weight:normal;color:#161513;transform:scaleX(0.9385);transform-origin:0 0;">DOOR8</div>
<div class="a" style="left:54px;top:613.0px;width:250px;height:1px;background:#e2e2e2;"></div>
<div class="a cb" style="left:64px;top:623px"></div>
<div class="t" style="left:100.3px;top:619.1px;font-size:12.68px;font-weight:normal;color:#00688c;transform:scaleX(0.9385);transform-origin:0 0;">DGANO.DOOR9</div>
<div class="t" style="left:224.3px;top:619.1px;font-size:13.0px;font-weight:normal;color:#161513;transform:scaleX(0.9385);transform-origin:0 0;">DOOR9</div>
<div class="a" style="left:54px;top:644.0px;width:250px;height:1px;background:#e2e2e2;"></div>
<div class="a cb" style="left:64px;top:654px"></div>
<div class="t" style="left:100.3px;top:650.1px;font-size:12.68px;font-weight:normal;color:#00688c;transform:scaleX(0.9385);transform-origin:0 0;">DGANO.DOOR10</div>
<div class="t" style="left:224.3px;top:650.1px;font-size:13.0px;font-weight:normal;color:#161513;transform:scaleX(0.9385);transform-origin:0 0;">DOOR10</div>
<div class="a" style="left:54px;top:675.0px;width:250px;height:1px;background:#e2e2e2;"></div>
<div class="a cb" style="left:64px;top:685px"></div>
<div class="t" style="left:100.3px;top:681.1px;font-size:12.68px;font-weight:normal;color:#00688c;transform:scaleX(0.9385);transform-origin:0 0;">DGANO.DOOR11</div>
<div class="t" style="left:224.3px;top:681.1px;font-size:13.0px;font-weight:normal;color:#161513;transform:scaleX(0.9385);transform-origin:0 0;">DOOR11</div>
<div class="a" style="left:54px;top:706.0px;width:250px;height:1px;background:#e2e2e2;"></div>
<div class="a cb" style="left:64px;top:716px"></div>
<div class="t" style="left:100.3px;top:712.2px;font-size:12.68px;font-weight:normal;color:#00688c;transform:scaleX(0.9385);transform-origin:0 0;">DGANO.DOOR12</div>
<div class="t" style="left:224.3px;top:712.2px;font-size:13.0px;font-weight:normal;color:#161513;transform:scaleX(0.9385);transform-origin:0 0;">DOOR12</div>
<div class="a" style="left:54px;top:737.1px;width:250px;height:1px;background:#e2e2e2;"></div>
<div class="a cb" style="left:64px;top:747px"></div>
<div class="t" style="left:100.3px;top:743.2px;font-size:12.68px;font-weight:normal;color:#00688c;transform:scaleX(0.9385);transform-origin:0 0;">DGANO.DOOR13</div>
<div class="t" style="left:224.3px;top:743.2px;font-size:13.0px;font-weight:normal;color:#161513;transform:scaleX(0.9385);transform-origin:0 0;">DOOR13</div>
<div class="a" style="left:54px;top:768.1px;width:250px;height:1px;background:#e2e2e2;"></div>
<div class="a cb" style="left:64px;top:778px"></div>
<div class="t" style="left:100.3px;top:774.2px;font-size:12.68px;font-weight:normal;color:#00688c;transform:scaleX(0.9385);transform-origin:0 0;">DGANO.DOOR14</div>
<div class="t" style="left:224.3px;top:774.2px;font-size:13.0px;font-weight:normal;color:#161513;transform:scaleX(0.9385);transform-origin:0 0;">DOOR14</div>
<div class="a" style="left:54px;top:799.1px;width:250px;height:1px;background:#e2e2e2;"></div>
<div class="a cb" style="left:64px;top:809px"></div>
<div class="t" style="left:100.3px;top:805.3px;font-size:12.68px;font-weight:normal;color:#00688c;transform:scaleX(0.9385);transform-origin:0 0;">DGANO.DOOR15</div>
<div class="t" style="left:224.3px;top:805.3px;font-size:13.0px;font-weight:normal;color:#161513;transform:scaleX(0.9385);transform-origin:0 0;">DOOR15</div>
<div class="a" style="left:54px;top:830.2px;width:250px;height:1px;background:#e2e2e2;"></div>
<div class="a cb" style="left:64px;top:840px"></div>
<div class="t" style="left:100.3px;top:836.3px;font-size:12.68px;font-weight:normal;color:#00688c;transform:scaleX(0.9385);transform-origin:0 0;">DGANO.DOOR16</div>
<div class="t" style="left:224.3px;top:836.3px;font-size:13.0px;font-weight:normal;color:#161513;transform:scaleX(0.9385);transform-origin:0 0;">DOOR16</div>
<div class="a" style="left:54px;top:861.2px;width:250px;height:1px;background:#e2e2e2;"></div>
<div class="a" style="left:306px;top:713.3px;width:1556px;height:32px;background:#e4f0f6;"></div>
<div class="a" style="left:306px;top:457px;width:1556px;height:1px;background:#b9b9b9;"></div>
<div class="a" style="left:306px;top:489px;width:1556px;height:1px;background:#b9b9b9;"></div>
<div class="a" style="left:306px;top:521px;width:1556px;height:1px;background:#b9b9b9;"></div>
<div class="a" style="left:306px;top:553px;width:1556px;height:1px;background:#b9b9b9;"></div>
<div class="a" style="left:306px;top:585px;width:1556px;height:1px;background:#b9b9b9;"></div>
<div class="a" style="left:306px;top:617px;width:1556px;height:1px;background:#b9b9b9;"></div>
<div class="a" style="left:306px;top:649px;width:1556px;height:1px;background:#b9b9b9;"></div>
<div class="a" style="left:306px;top:681px;width:1556px;height:1px;background:#b9b9b9;"></div>
<div class="a" style="left:306px;top:713px;width:1556px;height:1px;background:#b9b9b9;"></div>
<div class="a" style="left:306px;top:745px;width:1556px;height:1px;background:#b9b9b9;"></div>
<div class="a" style="left:306px;top:777px;width:1556px;height:1px;background:#b9b9b9;"></div>
<div class="a" style="left:306px;top:809px;width:1556px;height:1px;background:#b9b9b9;"></div>
<div class="a" style="left:306px;top:841px;width:1556px;height:1px;background:#b9b9b9;"></div>
<div class="a" style="left:1370px;top:383px;width:1px;height:480px;background:#a6a6a6;"></div>
<svg class="a" style="left:332px;top:405px" width="1" height="20"><path d="M0.5 0 V20" stroke="#a6a6a6" stroke-width="1" stroke-dasharray="3.6 4.4"/></svg>
<svg class="a" style="left:332px;top:426px" width="1" height="437"><path d="M0.5 0 V437" stroke="#a6a6a6" stroke-width="1" stroke-dasharray="4 4"/></svg>
<svg class="a" style="left:397px;top:405px" width="1" height="20"><path d="M0.5 0 V20" stroke="#a6a6a6" stroke-width="1" stroke-dasharray="3.6 4.4"/></svg>
<svg class="a" style="left:397px;top:426px" width="1" height="437"><path d="M0.5 0 V437" stroke="#a6a6a6" stroke-width="1" stroke-dasharray="4 4"/></svg>
<svg class="a" style="left:462px;top:405px" width="1" height="20"><path d="M0.5 0 V20" stroke="#a6a6a6" stroke-width="1" stroke-dasharray="3.6 4.4"/></svg>
<svg class="a" style="left:462px;top:426px" width="1" height="437"><path d="M0.5 0 V437" stroke="#a6a6a6" stroke-width="1" stroke-dasharray="4 4"/></svg>
<svg class="a" style="left:527px;top:405px" width="1" height="20"><path d="M0.5 0 V20" stroke="#a6a6a6" stroke-width="1" stroke-dasharray="3.6 4.4"/></svg>
<svg class="a" style="left:527px;top:426px" width="1" height="437"><path d="M0.5 0 V437" stroke="#a6a6a6" stroke-width="1" stroke-dasharray="4 4"/></svg>
<svg class="a" style="left:592px;top:405px" width="1" height="20"><path d="M0.5 0 V20" stroke="#a6a6a6" stroke-width="1" stroke-dasharray="3.6 4.4"/></svg>
<svg class="a" style="left:592px;top:426px" width="1" height="437"><path d="M0.5 0 V437" stroke="#a6a6a6" stroke-width="1" stroke-dasharray="4 4"/></svg>
<svg class="a" style="left:657px;top:405px" width="1" height="20"><path d="M0.5 0 V20" stroke="#a6a6a6" stroke-width="1" stroke-dasharray="3.6 4.4"/></svg>
<svg class="a" style="left:657px;top:426px" width="1" height="437"><path d="M0.5 0 V437" stroke="#a6a6a6" stroke-width="1" stroke-dasharray="4 4"/></svg>
<svg class="a" style="left:721px;top:405px" width="1" height="20"><path d="M0.5 0 V20" stroke="#a6a6a6" stroke-width="1" stroke-dasharray="3.6 4.4"/></svg>
<svg class="a" style="left:721px;top:426px" width="1" height="437"><path d="M0.5 0 V437" stroke="#a6a6a6" stroke-width="1" stroke-dasharray="4 4"/></svg>
<svg class="a" style="left:786px;top:405px" width="1" height="20"><path d="M0.5 0 V20" stroke="#a6a6a6" stroke-width="1" stroke-dasharray="3.6 4.4"/></svg>
<svg class="a" style="left:786px;top:426px" width="1" height="437"><path d="M0.5 0 V437" stroke="#a6a6a6" stroke-width="1" stroke-dasharray="4 4"/></svg>
<svg class="a" style="left:851px;top:405px" width="1" height="20"><path d="M0.5 0 V20" stroke="#a6a6a6" stroke-width="1" stroke-dasharray="3.6 4.4"/></svg>
<svg class="a" style="left:851px;top:426px" width="1" height="437"><path d="M0.5 0 V437" stroke="#a6a6a6" stroke-width="1" stroke-dasharray="4 4"/></svg>
<svg class="a" style="left:916px;top:405px" width="1" height="20"><path d="M0.5 0 V20" stroke="#a6a6a6" stroke-width="1" stroke-dasharray="3.6 4.4"/></svg>
<svg class="a" style="left:916px;top:426px" width="1" height="437"><path d="M0.5 0 V437" stroke="#a6a6a6" stroke-width="1" stroke-dasharray="4 4"/></svg>
<svg class="a" style="left:981px;top:405px" width="1" height="20"><path d="M0.5 0 V20" stroke="#a6a6a6" stroke-width="1" stroke-dasharray="3.6 4.4"/></svg>
<svg class="a" style="left:981px;top:426px" width="1" height="437"><path d="M0.5 0 V437" stroke="#a6a6a6" stroke-width="1" stroke-dasharray="4 4"/></svg>
<svg class="a" style="left:1046px;top:405px" width="1" height="20"><path d="M0.5 0 V20" stroke="#a6a6a6" stroke-width="1" stroke-dasharray="3.6 4.4"/></svg>
<svg class="a" style="left:1046px;top:426px" width="1" height="437"><path d="M0.5 0 V437" stroke="#a6a6a6" stroke-width="1" stroke-dasharray="4 4"/></svg>
<svg class="a" style="left:1110px;top:405px" width="1" height="20"><path d="M0.5 0 V20" stroke="#a6a6a6" stroke-width="1" stroke-dasharray="3.6 4.4"/></svg>
<svg class="a" style="left:1110px;top:426px" width="1" height="437"><path d="M0.5 0 V437" stroke="#a6a6a6" stroke-width="1" stroke-dasharray="4 4"/></svg>
<svg class="a" style="left:1175px;top:405px" width="1" height="20"><path d="M0.5 0 V20" stroke="#a6a6a6" stroke-width="1" stroke-dasharray="3.6 4.4"/></svg>
<svg class="a" style="left:1175px;top:426px" width="1" height="437"><path d="M0.5 0 V437" stroke="#a6a6a6" stroke-width="1" stroke-dasharray="4 4"/></svg>
<svg class="a" style="left:1240px;top:405px" width="1" height="20"><path d="M0.5 0 V20" stroke="#a6a6a6" stroke-width="1" stroke-dasharray="3.6 4.4"/></svg>
<svg class="a" style="left:1240px;top:426px" width="1" height="437"><path d="M0.5 0 V437" stroke="#a6a6a6" stroke-width="1" stroke-dasharray="4 4"/></svg>
<svg class="a" style="left:1305px;top:405px" width="1" height="20"><path d="M0.5 0 V20" stroke="#a6a6a6" stroke-width="1" stroke-dasharray="3.6 4.4"/></svg>
<svg class="a" style="left:1305px;top:426px" width="1" height="437"><path d="M0.5 0 V437" stroke="#a6a6a6" stroke-width="1" stroke-dasharray="4 4"/></svg>
<svg class="a" style="left:1435px;top:405px" width="1" height="20"><path d="M0.5 0 V20" stroke="#a6a6a6" stroke-width="1" stroke-dasharray="3.6 4.4"/></svg>
<svg class="a" style="left:1435px;top:426px" width="1" height="437"><path d="M0.5 0 V437" stroke="#a6a6a6" stroke-width="1" stroke-dasharray="4 4"/></svg>
<svg class="a" style="left:1499px;top:405px" width="1" height="20"><path d="M0.5 0 V20" stroke="#a6a6a6" stroke-width="1" stroke-dasharray="3.6 4.4"/></svg>
<svg class="a" style="left:1499px;top:426px" width="1" height="437"><path d="M0.5 0 V437" stroke="#a6a6a6" stroke-width="1" stroke-dasharray="4 4"/></svg>
<svg class="a" style="left:1564px;top:405px" width="1" height="20"><path d="M0.5 0 V20" stroke="#a6a6a6" stroke-width="1" stroke-dasharray="3.6 4.4"/></svg>
<svg class="a" style="left:1564px;top:426px" width="1" height="437"><path d="M0.5 0 V437" stroke="#a6a6a6" stroke-width="1" stroke-dasharray="4 4"/></svg>
<svg class="a" style="left:1629px;top:405px" width="1" height="20"><path d="M0.5 0 V20" stroke="#a6a6a6" stroke-width="1" stroke-dasharray="3.6 4.4"/></svg>
<svg class="a" style="left:1629px;top:426px" width="1" height="437"><path d="M0.5 0 V437" stroke="#a6a6a6" stroke-width="1" stroke-dasharray="4 4"/></svg>
<svg class="a" style="left:1694px;top:405px" width="1" height="20"><path d="M0.5 0 V20" stroke="#a6a6a6" stroke-width="1" stroke-dasharray="3.6 4.4"/></svg>
<svg class="a" style="left:1694px;top:426px" width="1" height="437"><path d="M0.5 0 V437" stroke="#a6a6a6" stroke-width="1" stroke-dasharray="4 4"/></svg>
<svg class="a" style="left:1759px;top:405px" width="1" height="20"><path d="M0.5 0 V20" stroke="#a6a6a6" stroke-width="1" stroke-dasharray="3.6 4.4"/></svg>
<svg class="a" style="left:1759px;top:426px" width="1" height="437"><path d="M0.5 0 V437" stroke="#a6a6a6" stroke-width="1" stroke-dasharray="4 4"/></svg>
<svg class="a" style="left:1824px;top:405px" width="1" height="20"><path d="M0.5 0 V20" stroke="#a6a6a6" stroke-width="1" stroke-dasharray="3.6 4.4"/></svg>
<svg class="a" style="left:1824px;top:426px" width="1" height="437"><path d="M0.5 0 V437" stroke="#a6a6a6" stroke-width="1" stroke-dasharray="4 4"/></svg>
<div class="a" style="left:591.5px;top:432px;width:1233.5px;height:17.5px;box-sizing:border-box;background:#808080;border:1.5px solid #3a3a3a;border-radius:2.5px"></div>
<div class="a" style="left:656px;top:432px;width:2px;height:17.5px;background:#2a2a2a;"></div>
<div class="a" style="left:720px;top:432px;width:2px;height:17.5px;background:#2a2a2a;"></div>
<div class="a" style="left:785px;top:432px;width:2px;height:17.5px;background:#2a2a2a;"></div>
<div class="a" style="left:850px;top:432px;width:2px;height:17.5px;background:#2a2a2a;"></div>
<div class="a" style="left:915px;top:432px;width:2px;height:17.5px;background:#2a2a2a;"></div>
<div class="a" style="left:980px;top:432px;width:2px;height:17.5px;background:#2a2a2a;"></div>
<div class="a" style="left:1045px;top:432px;width:2px;height:17.5px;background:#2a2a2a;"></div>
<div class="a" style="left:1109px;top:432px;width:2px;height:17.5px;background:#2a2a2a;"></div>
<div class="a" style="left:1174px;top:432px;width:2px;height:17.5px;background:#2a2a2a;"></div>
<div class="a" style="left:1239px;top:432px;width:2px;height:17.5px;background:#2a2a2a;"></div>
<div class="a" style="left:1304px;top:432px;width:2px;height:17.5px;background:#2a2a2a;"></div>
<div class="a" style="left:1369px;top:432px;width:2px;height:17.5px;background:#2a2a2a;"></div>
<div class="a" style="left:1434px;top:432px;width:2px;height:17.5px;background:#2a2a2a;"></div>
<div class="a" style="left:1498px;top:432px;width:2px;height:17.5px;background:#2a2a2a;"></div>
<div class="a" style="left:1563px;top:432px;width:2px;height:17.5px;background:#2a2a2a;"></div>
<div class="a" style="left:1628px;top:432px;width:2px;height:17.5px;background:#2a2a2a;"></div>
<div class="a" style="left:1693px;top:432px;width:2px;height:17.5px;background:#2a2a2a;"></div>
<div class="a" style="left:1758px;top:432px;width:2px;height:17.5px;background:#2a2a2a;"></div>
<div class="a" style="left:591.5px;top:464px;width:1233.5px;height:17.5px;box-sizing:border-box;background:#808080;border:1.5px solid #3a3a3a;border-radius:2.5px"></div>
<div class="a" style="left:656px;top:464px;width:2px;height:17.5px;background:#2a2a2a;"></div>
<div class="a" style="left:720px;top:464px;width:2px;height:17.5px;background:#2a2a2a;"></div>
<div class="a" style="left:785px;top:464px;width:2px;height:17.5px;background:#2a2a2a;"></div>
<div class="a" style="left:850px;top:464px;width:2px;height:17.5px;background:#2a2a2a;"></div>
<div class="a" style="left:915px;top:464px;width:2px;height:17.5px;background:#2a2a2a;"></div>
<div class="a" style="left:980px;top:464px;width:2px;height:17.5px;background:#2a2a2a;"></div>
<div class="a" style="left:1045px;top:464px;width:2px;height:17.5px;background:#2a2a2a;"></div>
<div class="a" style="left:1109px;top:464px;width:2px;height:17.5px;background:#2a2a2a;"></div>
<div class="a" style="left:1174px;top:464px;width:2px;height:17.5px;background:#2a2a2a;"></div>
<div class="a" style="left:1239px;top:464px;width:2px;height:17.5px;background:#2a2a2a;"></div>
<div class="a" style="left:1304px;top:464px;width:2px;height:17.5px;background:#2a2a2a;"></div>
<div class="a" style="left:1369px;top:464px;width:2px;height:17.5px;background:#2a2a2a;"></div>
<div class="a" style="left:1434px;top:464px;width:2px;height:17.5px;background:#2a2a2a;"></div>
<div class="a" style="left:1498px;top:464px;width:2px;height:17.5px;background:#2a2a2a;"></div>
<div class="a" style="left:1563px;top:464px;width:2px;height:17.5px;background:#2a2a2a;"></div>
<div class="a" style="left:1628px;top:464px;width:2px;height:17.5px;background:#2a2a2a;"></div>
<div class="a" style="left:1693px;top:464px;width:2px;height:17.5px;background:#2a2a2a;"></div>
<div class="a" style="left:1758px;top:464px;width:2px;height:17.5px;background:#2a2a2a;"></div>
<div class="a" style="left:591.5px;top:496px;width:1233.5px;height:17.5px;box-sizing:border-box;background:#808080;border:1.5px solid #3a3a3a;border-radius:2.5px"></div>
<div class="a" style="left:656px;top:496px;width:2px;height:17.5px;background:#2a2a2a;"></div>
<div class="a" style="left:720px;top:496px;width:2px;height:17.5px;background:#2a2a2a;"></div>
<div class="a" style="left:785px;top:496px;width:2px;height:17.5px;background:#2a2a2a;"></div>
<div class="a" style="left:850px;top:496px;width:2px;height:17.5px;background:#2a2a2a;"></div>
<div class="a" style="left:915px;top:496px;width:2px;height:17.5px;background:#2a2a2a;"></div>
<div class="a" style="left:980px;top:496px;width:2px;height:17.5px;background:#2a2a2a;"></div>
<div class="a" style="left:1045px;top:496px;width:2px;height:17.5px;background:#2a2a2a;"></div>
<div class="a" style="left:1109px;top:496px;width:2px;height:17.5px;background:#2a2a2a;"></div>
<div class="a" style="left:1174px;top:496px;width:2px;height:17.5px;background:#2a2a2a;"></div>
<div class="a" style="left:1239px;top:496px;width:2px;height:17.5px;background:#2a2a2a;"></div>
<div class="a" style="left:1304px;top:496px;width:2px;height:17.5px;background:#2a2a2a;"></div>
<div class="a" style="left:1369px;top:496px;width:2px;height:17.5px;background:#2a2a2a;"></div>
<div class="a" style="left:1434px;top:496px;width:2px;height:17.5px;background:#2a2a2a;"></div>
<div class="a" style="left:1498px;top:496px;width:2px;height:17.5px;background:#2a2a2a;"></div>
<div class="a" style="left:1563px;top:496px;width:2px;height:17.5px;background:#2a2a2a;"></div>
<div class="a" style="left:1628px;top:496px;width:2px;height:17.5px;background:#2a2a2a;"></div>
<div class="a" style="left:1693px;top:496px;width:2px;height:17.5px;background:#2a2a2a;"></div>
<div class="a" style="left:1758px;top:496px;width:2px;height:17.5px;background:#2a2a2a;"></div>
<div class="a" style="left:591.5px;top:528px;width:1233.5px;height:17.5px;box-sizing:border-box;background:#808080;border:1.5px solid #3a3a3a;border-radius:2.5px"></div>
<div class="a" style="left:656px;top:528px;width:2px;height:17.5px;background:#2a2a2a;"></div>
<div class="a" style="left:720px;top:528px;width:2px;height:17.5px;background:#2a2a2a;"></div>
<div class="a" style="left:785px;top:528px;width:2px;height:17.5px;background:#2a2a2a;"></div>
<div class="a" style="left:850px;top:528px;width:2px;height:17.5px;background:#2a2a2a;"></div>
<div class="a" style="left:915px;top:528px;width:2px;height:17.5px;background:#2a2a2a;"></div>
<div class="a" style="left:980px;top:528px;width:2px;height:17.5px;background:#2a2a2a;"></div>
<div class="a" style="left:1045px;top:528px;width:2px;height:17.5px;background:#2a2a2a;"></div>
<div class="a" style="left:1109px;top:528px;width:2px;height:17.5px;background:#2a2a2a;"></div>
<div class="a" style="left:1174px;top:528px;width:2px;height:17.5px;background:#2a2a2a;"></div>
<div class="a" style="left:1239px;top:528px;width:2px;height:17.5px;background:#2a2a2a;"></div>
<div class="a" style="left:1304px;top:528px;width:2px;height:17.5px;background:#2a2a2a;"></div>
<div class="a" style="left:1369px;top:528px;width:2px;height:17.5px;background:#2a2a2a;"></div>
<div class="a" style="left:1434px;top:528px;width:2px;height:17.5px;background:#2a2a2a;"></div>
<div class="a" style="left:1498px;top:528px;width:2px;height:17.5px;background:#2a2a2a;"></div>
<div class="a" style="left:1563px;top:528px;width:2px;height:17.5px;background:#2a2a2a;"></div>
<div class="a" style="left:1628px;top:528px;width:2px;height:17.5px;background:#2a2a2a;"></div>
<div class="a" style="left:1693px;top:528px;width:2px;height:17.5px;background:#2a2a2a;"></div>
<div class="a" style="left:1758px;top:528px;width:2px;height:17.5px;background:#2a2a2a;"></div>
<div class="a" style="left:591.5px;top:560px;width:1233.5px;height:17.5px;box-sizing:border-box;background:#808080;border:1.5px solid #3a3a3a;border-radius:2.5px"></div>
<div class="a" style="left:656px;top:560px;width:2px;height:17.5px;background:#2a2a2a;"></div>
<div class="a" style="left:720px;top:560px;width:2px;height:17.5px;background:#2a2a2a;"></div>
<div class="a" style="left:785px;top:560px;width:2px;height:17.5px;background:#2a2a2a;"></div>
<div class="a" style="left:850px;top:560px;width:2px;height:17.5px;background:#2a2a2a;"></div>
<div class="a" style="left:915px;top:560px;width:2px;height:17.5px;background:#2a2a2a;"></div>
<div class="a" style="left:980px;top:560px;width:2px;height:17.5px;background:#2a2a2a;"></div>
<div class="a" style="left:1045px;top:560px;width:2px;height:17.5px;background:#2a2a2a;"></div>
<div class="a" style="left:1109px;top:560px;width:2px;height:17.5px;background:#2a2a2a;"></div>
<div class="a" style="left:1174px;top:560px;width:2px;height:17.5px;background:#2a2a2a;"></div>
<div class="a" style="left:1239px;top:560px;width:2px;height:17.5px;background:#2a2a2a;"></div>
<div class="a" style="left:1304px;top:560px;width:2px;height:17.5px;background:#2a2a2a;"></div>
<div class="a" style="left:1369px;top:560px;width:2px;height:17.5px;background:#2a2a2a;"></div>
<div class="a" style="left:1434px;top:560px;width:2px;height:17.5px;background:#2a2a2a;"></div>
<div class="a" style="left:1498px;top:560px;width:2px;height:17.5px;background:#2a2a2a;"></div>
<div class="a" style="left:1563px;top:560px;width:2px;height:17.5px;background:#2a2a2a;"></div>
<div class="a" style="left:1628px;top:560px;width:2px;height:17.5px;background:#2a2a2a;"></div>
<div class="a" style="left:1693px;top:560px;width:2px;height:17.5px;background:#2a2a2a;"></div>
<div class="a" style="left:1758px;top:560px;width:2px;height:17.5px;background:#2a2a2a;"></div>
<div class="a" style="left:591.5px;top:592px;width:1233.5px;height:17.5px;box-sizing:border-box;background:#808080;border:1.5px solid #3a3a3a;border-radius:2.5px"></div>
<div class="a" style="left:656px;top:592px;width:2px;height:17.5px;background:#2a2a2a;"></div>
<div class="a" style="left:720px;top:592px;width:2px;height:17.5px;background:#2a2a2a;"></div>
<div class="a" style="left:785px;top:592px;width:2px;height:17.5px;background:#2a2a2a;"></div>
<div class="a" style="left:850px;top:592px;width:2px;height:17.5px;background:#2a2a2a;"></div>
<div class="a" style="left:915px;top:592px;width:2px;height:17.5px;background:#2a2a2a;"></div>
<div class="a" style="left:980px;top:592px;width:2px;height:17.5px;background:#2a2a2a;"></div>
<div class="a" style="left:1045px;top:592px;width:2px;height:17.5px;background:#2a2a2a;"></div>
<div class="a" style="left:1109px;top:592px;width:2px;height:17.5px;background:#2a2a2a;"></div>
<div class="a" style="left:1174px;top:592px;width:2px;height:17.5px;background:#2a2a2a;"></div>
<div class="a" style="left:1239px;top:592px;width:2px;height:17.5px;background:#2a2a2a;"></div>
<div class="a" style="left:1304px;top:592px;width:2px;height:17.5px;background:#2a2a2a;"></div>
<div class="a" style="left:1369px;top:592px;width:2px;height:17.5px;background:#2a2a2a;"></div>
<div class="a" style="left:1434px;top:592px;width:2px;height:17.5px;background:#2a2a2a;"></div>
<div class="a" style="left:1498px;top:592px;width:2px;height:17.5px;background:#2a2a2a;"></div>
<div class="a" style="left:1563px;top:592px;width:2px;height:17.5px;background:#2a2a2a;"></div>
<div class="a" style="left:1628px;top:592px;width:2px;height:17.5px;background:#2a2a2a;"></div>
<div class="a" style="left:1693px;top:592px;width:2px;height:17.5px;background:#2a2a2a;"></div>
<div class="a" style="left:1758px;top:592px;width:2px;height:17.5px;background:#2a2a2a;"></div>
<div class="a" style="left:591.5px;top:624px;width:1233.5px;height:17.5px;box-sizing:border-box;background:#808080;border:1.5px solid #3a3a3a;border-radius:2.5px"></div>
<div class="a" style="left:656px;top:624px;width:2px;height:17.5px;background:#2a2a2a;"></div>
<div class="a" style="left:720px;top:624px;width:2px;height:17.5px;background:#2a2a2a;"></div>
<div class="a" style="left:785px;top:624px;width:2px;height:17.5px;background:#2a2a2a;"></div>
<div class="a" style="left:850px;top:624px;width:2px;height:17.5px;background:#2a2a2a;"></div>
<div class="a" style="left:915px;top:624px;width:2px;height:17.5px;background:#2a2a2a;"></div>
<div class="a" style="left:980px;top:624px;width:2px;height:17.5px;background:#2a2a2a;"></div>
<div class="a" style="left:1045px;top:624px;width:2px;height:17.5px;background:#2a2a2a;"></div>
<div class="a" style="left:1109px;top:624px;width:2px;height:17.5px;background:#2a2a2a;"></div>
<div class="a" style="left:1174px;top:624px;width:2px;height:17.5px;background:#2a2a2a;"></div>
<div class="a" style="left:1239px;top:624px;width:2px;height:17.5px;background:#2a2a2a;"></div>
<div class="a" style="left:1304px;top:624px;width:2px;height:17.5px;background:#2a2a2a;"></div>
<div class="a" style="left:1369px;top:624px;width:2px;height:17.5px;background:#2a2a2a;"></div>
<div class="a" style="left:1434px;top:624px;width:2px;height:17.5px;background:#2a2a2a;"></div>
<div class="a" style="left:1498px;top:624px;width:2px;height:17.5px;background:#2a2a2a;"></div>
<div class="a" style="left:1563px;top:624px;width:2px;height:17.5px;background:#2a2a2a;"></div>
<div class="a" style="left:1628px;top:624px;width:2px;height:17.5px;background:#2a2a2a;"></div>
<div class="a" style="left:1693px;top:624px;width:2px;height:17.5px;background:#2a2a2a;"></div>
<div class="a" style="left:1758px;top:624px;width:2px;height:17.5px;background:#2a2a2a;"></div>
<div class="a" style="left:591.5px;top:656px;width:1233.5px;height:17.5px;box-sizing:border-box;background:#808080;border:1.5px solid #3a3a3a;border-radius:2.5px"></div>
<div class="a" style="left:656px;top:656px;width:2px;height:17.5px;background:#2a2a2a;"></div>
<div class="a" style="left:720px;top:656px;width:2px;height:17.5px;background:#2a2a2a;"></div>
<div class="a" style="left:785px;top:656px;width:2px;height:17.5px;background:#2a2a2a;"></div>
<div class="a" style="left:850px;top:656px;width:2px;height:17.5px;background:#2a2a2a;"></div>
<div class="a" style="left:915px;top:656px;width:2px;height:17.5px;background:#2a2a2a;"></div>
<div class="a" style="left:980px;top:656px;width:2px;height:17.5px;background:#2a2a2a;"></div>
<div class="a" style="left:1045px;top:656px;width:2px;height:17.5px;background:#2a2a2a;"></div>
<div class="a" style="left:1109px;top:656px;width:2px;height:17.5px;background:#2a2a2a;"></div>
<div class="a" style="left:1174px;top:656px;width:2px;height:17.5px;background:#2a2a2a;"></div>
<div class="a" style="left:1239px;top:656px;width:2px;height:17.5px;background:#2a2a2a;"></div>
<div class="a" style="left:1304px;top:656px;width:2px;height:17.5px;background:#2a2a2a;"></div>
<div class="a" style="left:1369px;top:656px;width:2px;height:17.5px;background:#2a2a2a;"></div>
<div class="a" style="left:1434px;top:656px;width:2px;height:17.5px;background:#2a2a2a;"></div>
<div class="a" style="left:1498px;top:656px;width:2px;height:17.5px;background:#2a2a2a;"></div>
<div class="a" style="left:1563px;top:656px;width:2px;height:17.5px;background:#2a2a2a;"></div>
<div class="a" style="left:1628px;top:656px;width:2px;height:17.5px;background:#2a2a2a;"></div>
<div class="a" style="left:1693px;top:656px;width:2px;height:17.5px;background:#2a2a2a;"></div>
<div class="a" style="left:1758px;top:656px;width:2px;height:17.5px;background:#2a2a2a;"></div>
<div class="a" style="left:591.5px;top:688px;width:1233.5px;height:17.5px;box-sizing:border-box;background:#808080;border:1.5px solid #3a3a3a;border-radius:2.5px"></div>
<div class="a" style="left:656px;top:688px;width:2px;height:17.5px;background:#2a2a2a;"></div>
<div class="a" style="left:720px;top:688px;width:2px;height:17.5px;background:#2a2a2a;"></div>
<div class="a" style="left:785px;top:688px;width:2px;height:17.5px;background:#2a2a2a;"></div>
<div class="a" style="left:850px;top:688px;width:2px;height:17.5px;background:#2a2a2a;"></div>
<div class="a" style="left:915px;top:688px;width:2px;height:17.5px;background:#2a2a2a;"></div>
<div class="a" style="left:980px;top:688px;width:2px;height:17.5px;background:#2a2a2a;"></div>
<div class="a" style="left:1045px;top:688px;width:2px;height:17.5px;background:#2a2a2a;"></div>
<div class="a" style="left:1109px;top:688px;width:2px;height:17.5px;background:#2a2a2a;"></div>
<div class="a" style="left:1174px;top:688px;width:2px;height:17.5px;background:#2a2a2a;"></div>
<div class="a" style="left:1239px;top:688px;width:2px;height:17.5px;background:#2a2a2a;"></div>
<div class="a" style="left:1304px;top:688px;width:2px;height:17.5px;background:#2a2a2a;"></div>
<div class="a" style="left:1369px;top:688px;width:2px;height:17.5px;background:#2a2a2a;"></div>
<div class="a" style="left:1434px;top:688px;width:2px;height:17.5px;background:#2a2a2a;"></div>
<div class="a" style="left:1498px;top:688px;width:2px;height:17.5px;background:#2a2a2a;"></div>
<div class="a" style="left:1563px;top:688px;width:2px;height:17.5px;background:#2a2a2a;"></div>
<div class="a" style="left:1628px;top:688px;width:2px;height:17.5px;background:#2a2a2a;"></div>
<div class="a" style="left:1693px;top:688px;width:2px;height:17.5px;background:#2a2a2a;"></div>
<div class="a" style="left:1758px;top:688px;width:2px;height:17.5px;background:#2a2a2a;"></div>
<div class="a" style="left:591.5px;top:720px;width:1233.5px;height:17.5px;box-sizing:border-box;background:#808080;border:1.5px solid #3a3a3a;border-radius:2.5px"></div>
<div class="a" style="left:656px;top:720px;width:2px;height:17.5px;background:#2a2a2a;"></div>
<div class="a" style="left:720px;top:720px;width:2px;height:17.5px;background:#2a2a2a;"></div>
<div class="a" style="left:785px;top:720px;width:2px;height:17.5px;background:#2a2a2a;"></div>
<div class="a" style="left:850px;top:720px;width:2px;height:17.5px;background:#2a2a2a;"></div>
<div class="a" style="left:915px;top:720px;width:2px;height:17.5px;background:#2a2a2a;"></div>
<div class="a" style="left:980px;top:720px;width:2px;height:17.5px;background:#2a2a2a;"></div>
<div class="a" style="left:1045px;top:720px;width:2px;height:17.5px;background:#2a2a2a;"></div>
<div class="a" style="left:1109px;top:720px;width:2px;height:17.5px;background:#2a2a2a;"></div>
<div class="a" style="left:1174px;top:720px;width:2px;height:17.5px;background:#2a2a2a;"></div>
<div class="a" style="left:1239px;top:720px;width:2px;height:17.5px;background:#2a2a2a;"></div>
<div class="a" style="left:1304px;top:720px;width:2px;height:17.5px;background:#2a2a2a;"></div>
<div class="a" style="left:1369px;top:720px;width:2px;height:17.5px;background:#2a2a2a;"></div>
<div class="a" style="left:1434px;top:720px;width:2px;height:17.5px;background:#2a2a2a;"></div>
<div class="a" style="left:1498px;top:720px;width:2px;height:17.5px;background:#2a2a2a;"></div>
<div class="a" style="left:1563px;top:720px;width:2px;height:17.5px;background:#2a2a2a;"></div>
<div class="a" style="left:1628px;top:720px;width:2px;height:17.5px;background:#2a2a2a;"></div>
<div class="a" style="left:1693px;top:720px;width:2px;height:17.5px;background:#2a2a2a;"></div>
<div class="a" style="left:1758px;top:720px;width:2px;height:17.5px;background:#2a2a2a;"></div>
<div class="a" style="left:591.5px;top:752px;width:1233.5px;height:17.5px;box-sizing:border-box;background:#808080;border:1.5px solid #3a3a3a;border-radius:2.5px"></div>
<div class="a" style="left:656px;top:752px;width:2px;height:17.5px;background:#2a2a2a;"></div>
<div class="a" style="left:720px;top:752px;width:2px;height:17.5px;background:#2a2a2a;"></div>
<div class="a" style="left:785px;top:752px;width:2px;height:17.5px;background:#2a2a2a;"></div>
<div class="a" style="left:850px;top:752px;width:2px;height:17.5px;background:#2a2a2a;"></div>
<div class="a" style="left:915px;top:752px;width:2px;height:17.5px;background:#2a2a2a;"></div>
<div class="a" style="left:980px;top:752px;width:2px;height:17.5px;background:#2a2a2a;"></div>
<div class="a" style="left:1045px;top:752px;width:2px;height:17.5px;background:#2a2a2a;"></div>
<div class="a" style="left:1109px;top:752px;width:2px;height:17.5px;background:#2a2a2a;"></div>
<div class="a" style="left:1174px;top:752px;width:2px;height:17.5px;background:#2a2a2a;"></div>
<div class="a" style="left:1239px;top:752px;width:2px;height:17.5px;background:#2a2a2a;"></div>
<div class="a" style="left:1304px;top:752px;width:2px;height:17.5px;background:#2a2a2a;"></div>
<div class="a" style="left:1369px;top:752px;width:2px;height:17.5px;background:#2a2a2a;"></div>
<div class="a" style="left:1434px;top:752px;width:2px;height:17.5px;background:#2a2a2a;"></div>
<div class="a" style="left:1498px;top:752px;width:2px;height:17.5px;background:#2a2a2a;"></div>
<div class="a" style="left:1563px;top:752px;width:2px;height:17.5px;background:#2a2a2a;"></div>
<div class="a" style="left:1628px;top:752px;width:2px;height:17.5px;background:#2a2a2a;"></div>
<div class="a" style="left:1693px;top:752px;width:2px;height:17.5px;background:#2a2a2a;"></div>
<div class="a" style="left:1758px;top:752px;width:2px;height:17.5px;background:#2a2a2a;"></div>
<div class="a" style="left:591.5px;top:784px;width:1233.5px;height:17.5px;box-sizing:border-box;background:#808080;border:1.5px solid #3a3a3a;border-radius:2.5px"></div>
<div class="a" style="left:656px;top:784px;width:2px;height:17.5px;background:#2a2a2a;"></div>
<div class="a" style="left:720px;top:784px;width:2px;height:17.5px;background:#2a2a2a;"></div>
<div class="a" style="left:785px;top:784px;width:2px;height:17.5px;background:#2a2a2a;"></div>
<div class="a" style="left:850px;top:784px;width:2px;height:17.5px;background:#2a2a2a;"></div>
<div class="a" style="left:915px;top:784px;width:2px;height:17.5px;background:#2a2a2a;"></div>
<div class="a" style="left:980px;top:784px;width:2px;height:17.5px;background:#2a2a2a;"></div>
<div class="a" style="left:1045px;top:784px;width:2px;height:17.5px;background:#2a2a2a;"></div>
<div class="a" style="left:1109px;top:784px;width:2px;height:17.5px;background:#2a2a2a;"></div>
<div class="a" style="left:1174px;top:784px;width:2px;height:17.5px;background:#2a2a2a;"></div>
<div class="a" style="left:1239px;top:784px;width:2px;height:17.5px;background:#2a2a2a;"></div>
<div class="a" style="left:1304px;top:784px;width:2px;height:17.5px;background:#2a2a2a;"></div>
<div class="a" style="left:1369px;top:784px;width:2px;height:17.5px;background:#2a2a2a;"></div>
<div class="a" style="left:1434px;top:784px;width:2px;height:17.5px;background:#2a2a2a;"></div>
<div class="a" style="left:1498px;top:784px;width:2px;height:17.5px;background:#2a2a2a;"></div>
<div class="a" style="left:1563px;top:784px;width:2px;height:17.5px;background:#2a2a2a;"></div>
<div class="a" style="left:1628px;top:784px;width:2px;height:17.5px;background:#2a2a2a;"></div>
<div class="a" style="left:1693px;top:784px;width:2px;height:17.5px;background:#2a2a2a;"></div>
<div class="a" style="left:1758px;top:784px;width:2px;height:17.5px;background:#2a2a2a;"></div>
<div class="a" style="left:591.5px;top:816px;width:1233.5px;height:17.5px;box-sizing:border-box;background:#808080;border:1.5px solid #3a3a3a;border-radius:2.5px"></div>
<div class="a" style="left:656px;top:816px;width:2px;height:17.5px;background:#2a2a2a;"></div>
<div class="a" style="left:720px;top:816px;width:2px;height:17.5px;background:#2a2a2a;"></div>
<div class="a" style="left:785px;top:816px;width:2px;height:17.5px;background:#2a2a2a;"></div>
<div class="a" style="left:850px;top:816px;width:2px;height:17.5px;background:#2a2a2a;"></div>
<div class="a" style="left:915px;top:816px;width:2px;height:17.5px;background:#2a2a2a;"></div>
<div class="a" style="left:980px;top:816px;width:2px;height:17.5px;background:#2a2a2a;"></div>
<div class="a" style="left:1045px;top:816px;width:2px;height:17.5px;background:#2a2a2a;"></div>
<div class="a" style="left:1109px;top:816px;width:2px;height:17.5px;background:#2a2a2a;"></div>
<div class="a" style="left:1174px;top:816px;width:2px;height:17.5px;background:#2a2a2a;"></div>
<div class="a" style="left:1239px;top:816px;width:2px;height:17.5px;background:#2a2a2a;"></div>
<div class="a" style="left:1304px;top:816px;width:2px;height:17.5px;background:#2a2a2a;"></div>
<div class="a" style="left:1369px;top:816px;width:2px;height:17.5px;background:#2a2a2a;"></div>
<div class="a" style="left:1434px;top:816px;width:2px;height:17.5px;background:#2a2a2a;"></div>
<div class="a" style="left:1498px;top:816px;width:2px;height:17.5px;background:#2a2a2a;"></div>
<div class="a" style="left:1563px;top:816px;width:2px;height:17.5px;background:#2a2a2a;"></div>
<div class="a" style="left:1628px;top:816px;width:2px;height:17.5px;background:#2a2a2a;"></div>
<div class="a" style="left:1693px;top:816px;width:2px;height:17.5px;background:#2a2a2a;"></div>
<div class="a" style="left:1758px;top:816px;width:2px;height:17.5px;background:#2a2a2a;"></div>
<div class="a" style="left:591.5px;top:848px;width:1233.5px;height:17.5px;box-sizing:border-box;background:#808080;border:1.5px solid #3a3a3a;border-radius:2.5px"></div>
<div class="a" style="left:656px;top:848px;width:2px;height:17.5px;background:#2a2a2a;"></div>
<div class="a" style="left:720px;top:848px;width:2px;height:17.5px;background:#2a2a2a;"></div>
<div class="a" style="left:785px;top:848px;width:2px;height:17.5px;background:#2a2a2a;"></div>
<div class="a" style="left:850px;top:848px;width:2px;height:17.5px;background:#2a2a2a;"></div>
<div class="a" style="left:915px;top:848px;width:2px;height:17.5px;background:#2a2a2a;"></div>
<div class="a" style="left:980px;top:848px;width:2px;height:17.5px;background:#2a2a2a;"></div>
<div class="a" style="left:1045px;top:848px;width:2px;height:17.5px;background:#2a2a2a;"></div>
<div class="a" style="left:1109px;top:848px;width:2px;height:17.5px;background:#2a2a2a;"></div>
<div class="a" style="left:1174px;top:848px;width:2px;height:17.5px;background:#2a2a2a;"></div>
<div class="a" style="left:1239px;top:848px;width:2px;height:17.5px;background:#2a2a2a;"></div>
<div class="a" style="left:1304px;top:848px;width:2px;height:17.5px;background:#2a2a2a;"></div>
<div class="a" style="left:1369px;top:848px;width:2px;height:17.5px;background:#2a2a2a;"></div>
<div class="a" style="left:1434px;top:848px;width:2px;height:17.5px;background:#2a2a2a;"></div>
<div class="a" style="left:1498px;top:848px;width:2px;height:17.5px;background:#2a2a2a;"></div>
<div class="a" style="left:1563px;top:848px;width:2px;height:17.5px;background:#2a2a2a;"></div>
<div class="a" style="left:1628px;top:848px;width:2px;height:17.5px;background:#2a2a2a;"></div>
<div class="a" style="left:1693px;top:848px;width:2px;height:17.5px;background:#2a2a2a;"></div>
<div class="a" style="left:1758px;top:848px;width:2px;height:17.5px;background:#2a2a2a;"></div>
<div class="t" style="left:337px;top:400.9px;font-size:10.0px;font-weight:normal;color:#161513;letter-spacing:0.2px">8 AM</div>
<div class="t" style="left:402px;top:400.9px;font-size:10.0px;font-weight:normal;color:#161513;letter-spacing:0.2px">9 AM</div>
<div class="t" style="left:467px;top:400.9px;font-size:10.0px;font-weight:normal;color:#161513;letter-spacing:0.2px">10 AM</div>
<div class="t" style="left:532px;top:400.9px;font-size:10.0px;font-weight:normal;color:#161513;letter-spacing:0.2px">11 AM</div>
<div class="t" style="left:597px;top:400.9px;font-size:10.0px;font-weight:normal;color:#161513;letter-spacing:0.2px">12 PM</div>
<div class="t" style="left:662px;top:400.9px;font-size:10.0px;font-weight:normal;color:#161513;letter-spacing:0.2px">1 PM</div>
<div class="t" style="left:726px;top:400.9px;font-size:10.0px;font-weight:normal;color:#161513;letter-spacing:0.2px">2 PM</div>
<div class="t" style="left:791px;top:400.9px;font-size:10.0px;font-weight:normal;color:#161513;letter-spacing:0.2px">3 PM</div>
<div class="t" style="left:856px;top:400.9px;font-size:10.0px;font-weight:normal;color:#161513;letter-spacing:0.2px">4 PM</div>
<div class="t" style="left:921px;top:400.9px;font-size:10.0px;font-weight:normal;color:#161513;letter-spacing:0.2px">5 PM</div>
<div class="t" style="left:986px;top:400.9px;font-size:10.0px;font-weight:normal;color:#161513;letter-spacing:0.2px">6 PM</div>
<div class="t" style="left:1051px;top:400.9px;font-size:10.0px;font-weight:normal;color:#161513;letter-spacing:0.2px">7 PM</div>
<div class="t" style="left:1115px;top:400.9px;font-size:10.0px;font-weight:normal;color:#161513;letter-spacing:0.2px">8 PM</div>
<div class="t" style="left:1180px;top:400.9px;font-size:10.0px;font-weight:normal;color:#161513;letter-spacing:0.2px">9 PM</div>
<div class="t" style="left:1245px;top:400.9px;font-size:10.0px;font-weight:normal;color:#161513;letter-spacing:0.2px">10 PM</div>
<div class="t" style="left:1310px;top:400.9px;font-size:10.0px;font-weight:normal;color:#161513;letter-spacing:0.2px">11 PM</div>
<div class="t" style="left:1375px;top:400.9px;font-size:10.0px;font-weight:normal;color:#161513;letter-spacing:0.2px">12 AM</div>
<div class="t" style="left:1440px;top:400.9px;font-size:10.0px;font-weight:normal;color:#161513;letter-spacing:0.2px">1 AM</div>
<div class="t" style="left:1504px;top:400.9px;font-size:10.0px;font-weight:normal;color:#161513;letter-spacing:0.2px">2 AM</div>
<div class="t" style="left:1569px;top:400.9px;font-size:10.0px;font-weight:normal;color:#161513;letter-spacing:0.2px">3 AM</div>
<div class="t" style="left:1634px;top:400.9px;font-size:10.0px;font-weight:normal;color:#161513;letter-spacing:0.2px">4 AM</div>
<div class="t" style="left:1699px;top:400.9px;font-size:10.0px;font-weight:normal;color:#161513;letter-spacing:0.2px">5 AM</div>
<div class="t" style="left:1764px;top:400.9px;font-size:10.0px;font-weight:normal;color:#161513;letter-spacing:0.2px">6 AM</div>
<div class="t" style="left:1829px;top:400.9px;font-size:10.0px;font-weight:normal;color:#161513;letter-spacing:0.2px">7 AM</div>
<div class="t" style="left:1374.7px;top:380.4px;font-size:13.22px;font-weight:bold;color:#161513;transform:scaleX(0.9000);transform-origin:0 0;">Thursday, December 22, 2022</div>
<div class="a" style="left:1820.2px;top:393.1px;width:31.4px;height:31.4px;box-sizing:border-box;border-radius:50%;background:#fff;border:1px solid #8a8a8a"></div>
<svg class="a" style="left:1825.4px;top:398.3px;" width="21" height="21" viewBox="0 0 21 21"><path d="M5 10.5 H16" stroke="#9a9a9a" stroke-width="1.5"/><path d="M10.5 5 V16" stroke="#9a9a9a" stroke-width="1.5"/></svg>
<div class="a" style="left:1820.2px;top:433.1px;width:31.4px;height:31.4px;box-sizing:border-box;border-radius:50%;background:#fff;border:1px solid #8a8a8a"></div>
<svg class="a" style="left:1825.4px;top:438.3px;" width="21" height="21" viewBox="0 0 21 21"><path d="M5 10.5 H16" stroke="#9a9a9a" stroke-width="1.5"/></svg>
<div class="a" style="left:1872px;top:426px;width:1px;height:430px;background:#9a9a9a;"></div>
<div class="a" style="left:311px;top:372px;width:1559px;height:65px;box-sizing:border-box;border:4px solid #e41c24"></div>
<div class="a" style="left:1873px;top:2px;width:3px;height:861px;background:#cbcbcb;"></div>
<div class="a" style="left:0px;top:863px;width:1880px;height:13px;background:#1c1c1c;"></div>
<div class="a" style="left:373px;top:863px;width:48px;height:13px;background:#a0582a;"></div>
<div class="a" style="left:417px;top:863px;width:4px;height:13px;background:#8a4a22;"></div>
<div class="a" style="left:471px;top:863px;width:45px;height:13px;background:#444444;"></div>
<div class="a" style="left:516px;top:863px;width:3px;height:13px;background:#2e2e2e;"></div>
<svg class="a" style="left:0px;top:863px;" width="1880" height="13" viewBox="0 0 1880 13">
<path d="M5 13 L8 11 L10 13 Z" fill="#eee"/>
<circle cx="53" cy="13" r="2.4" fill="#eee"/>
<rect x="91" y="10.5" width="22" height="3" fill="#d8d8d8"/>
<circle cx="152" cy="14.5" r="7" fill="#6fbf4a"/><circle cx="150" cy="14.5" r="5" fill="#e9e9e9"/>
<rect x="195" y="10" width="18" height="4" fill="#3a8fd8"/>
<ellipse cx="252" cy="14" rx="8" ry="4" fill="#e24c4c"/><ellipse cx="252" cy="14.5" rx="6" ry="3" fill="#f3dcdc"/>
<circle cx="298" cy="18" r="10" fill="#e4342b"/>
<rect x="337" y="10.6" width="21" height="3" fill="#e8b530"/>
<rect x="392" y="10" width="15" height="4" fill="#1a6fc9"/>
<path d="M441 13 L445.5 8.2 L449 13 Z" fill="#f0c33c"/><path d="M441 13 L443 10.5 L445 13 Z" fill="#e0609a"/>
<path d="M485 13 L490 10 L492 13 Z" fill="#d9a624"/><path d="M492 13 L496.5 7.5 L502.5 13 Z" fill="#f2cb3b"/>
<rect x="533" y="9.5" width="22" height="4.5" fill="#2e9be8"/><rect x="542" y="10.5" width="3" height="3" fill="#eaf4fb"/>
<rect x="1859" y="12" width="16" height="2" fill="#f2f2f2"/>
</svg>
<div class="a" style="left:0;top:863px;width:1880px;height:13px;overflow:hidden">
<div class="t" style="left:1794.3px;top:-0.5999999999999996px;font-size:11.1px;font-weight:normal;color:#f2f2f2;">6:19 PM</div>
</div>
</body></html>
